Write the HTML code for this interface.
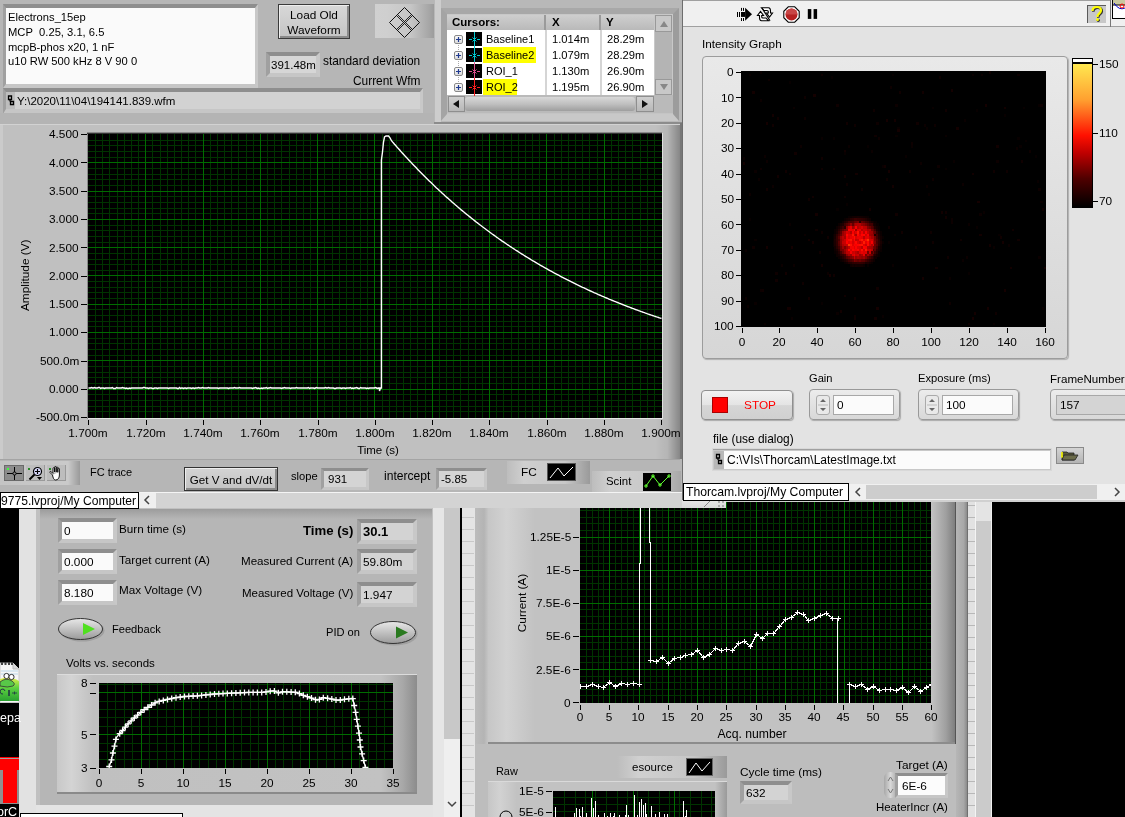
<!DOCTYPE html><html><head><meta charset="utf-8"><style>
html,body{margin:0;padding:0;width:1125px;height:817px;overflow:hidden;background:#000}
div,svg,span{position:absolute}
.t{font-family:"Liberation Sans",sans-serif;white-space:pre;color:#000;will-change:transform}
svg path, svg rect, svg circle{position:static}
</style></head><body>
<div style="left:19px;top:508px;width:443px;height:309px;background:#e2e2e2"></div>
<div style="left:36px;top:508px;width:397px;height:297px;background:#c0c0c0"></div>
<div style="left:40px;top:509px;width:392px;height:296px;background:#b6b6b6"></div>
<div style="left:40px;top:509px;width:392px;height:10px;background:linear-gradient(#9c9c9c,#b6b6b6)"></div>
<div style="left:36px;top:805px;width:397px;height:12px;background:#e4e4e4"></div>
<div style="left:433px;top:508px;width:11px;height:309px;background:#e6e6e6"></div>
<div style="left:444px;top:508px;width:16px;height:231px;background:#c8c8c8"></div>
<div style="left:444px;top:739px;width:16px;height:78px;background:#efefef"></div>
<svg style="left:446px;top:800px" width="12" height="10"><path d="M2 2 L6 6 L10 2" stroke="#444" stroke-width="1.5" fill="none"/></svg>
<div style="left:460px;top:508px;width:2px;height:309px;background:#000"></div>
<div style="left:58px;top:518px;width:59px;height:25px;box-sizing:border-box;border-style:solid;border-width:4px 4px 4px 4px;border-color:#8e8e8e #c8c8c8 #c6c6c6 #a0a0a0;background:#fafafa"></div>
<span class="t" style="left:64px;top:523.6px;font-size:11.8px;line-height:14px;">0</span>
<div style="left:58px;top:549px;width:59px;height:25px;box-sizing:border-box;border-style:solid;border-width:4px 4px 4px 4px;border-color:#8e8e8e #c8c8c8 #c6c6c6 #a0a0a0;background:#fafafa"></div>
<span class="t" style="left:64px;top:554.6px;font-size:11.8px;line-height:14px;">0.000</span>
<div style="left:58px;top:580px;width:59px;height:25px;box-sizing:border-box;border-style:solid;border-width:4px 4px 4px 4px;border-color:#8e8e8e #c8c8c8 #c6c6c6 #a0a0a0;background:#fafafa"></div>
<span class="t" style="left:64px;top:585.6px;font-size:11.8px;line-height:14px;">8.180</span>
<span class="t" style="left:119px;top:521.6px;font-size:11.7px;line-height:13px;">Burn time (s)</span>
<span class="t" style="left:119px;top:552.6px;font-size:11.7px;line-height:13px;">Target current (A)</span>
<span class="t" style="left:119px;top:582.6px;font-size:11.7px;line-height:13px;">Max Voltage (V)</span>
<div style="left:357px;top:519px;width:60px;height:25px;box-sizing:border-box;border-style:solid;border-width:4px 4px 4px 4px;border-color:#8e8e8e #c8c8c8 #c6c6c6 #a0a0a0;background:#d3d3d3"></div>
<span class="t" style="left:363px;top:524.1px;font-size:13px;line-height:15px;font-weight:bold">30.1</span>
<div style="left:357px;top:549px;width:60px;height:25px;box-sizing:border-box;border-style:solid;border-width:4px 4px 4px 4px;border-color:#8e8e8e #c8c8c8 #c6c6c6 #a0a0a0;background:#d3d3d3"></div>
<span class="t" style="left:363px;top:554.6px;font-size:11.8px;line-height:14px;">59.80m</span>
<div style="left:357px;top:582px;width:60px;height:25px;box-sizing:border-box;border-style:solid;border-width:4px 4px 4px 4px;border-color:#8e8e8e #c8c8c8 #c6c6c6 #a0a0a0;background:#d3d3d3"></div>
<span class="t" style="left:363px;top:587.6px;font-size:11.8px;line-height:14px;">1.947</span>
<span class="t" style="right:772px;top:522.7px;font-size:13.2px;line-height:15px;"><b>Time (s)</b></span>
<span class="t" style="right:772px;top:553.6px;font-size:11.6px;line-height:13px;">Measured Current (A)</span>
<span class="t" style="right:772px;top:586.6px;font-size:11.5px;line-height:13px;">Measured Voltage (V)</span>
<svg style="left:58px;top:618px" width="49" height="26"><defs><linearGradient id="og58" x1="0" y1="0" x2="0" y2="1"><stop offset="0" stop-color="#e8e8e8"/><stop offset="1" stop-color="#9a9a9a"/></linearGradient></defs><ellipse cx="24.0" cy="12.5" rx="22.5" ry="11.0" fill="#8a8a8a" opacity="0.5"/><ellipse cx="22.5" cy="11.0" rx="22.0" ry="10.5" fill="url(#og58)" stroke="#333" stroke-width="1"/><path d="M25 5.0 L37 11.0 L25 17.0Z" fill="#50e020"/></svg>
<span class="t" style="left:112px;top:622.6px;font-size:11.1px;line-height:13px;">Feedback</span>
<svg style="left:370px;top:621px" width="50" height="27"><defs><linearGradient id="og370" x1="0" y1="0" x2="0" y2="1"><stop offset="0" stop-color="#e8e8e8"/><stop offset="1" stop-color="#9a9a9a"/></linearGradient></defs><ellipse cx="24.5" cy="13.0" rx="23.0" ry="11.5" fill="#8a8a8a" opacity="0.5"/><ellipse cx="23.0" cy="11.5" rx="22.5" ry="11.0" fill="url(#og370)" stroke="#333" stroke-width="1"/><path d="M26 5.5 L38 11.5 L26 17.5Z" fill="#2a7a20"/></svg>
<span class="t" style="right:765px;top:625.6px;font-size:11.1px;line-height:13px;">PID on</span>
<span class="t" style="left:66px;top:657.3px;font-size:11.5px;line-height:13px;">Volts vs. seconds</span>
<div style="left:57px;top:674px;width:360px;height:120px;background:linear-gradient(90deg,#c8c8c8,#d4d4d4 4%,#c0c0c0 10%,#c2c2c2 90%,#a8a8a8 96%,#8c8c8c);border-top:1px solid #dcdcdc;box-sizing:border-box"></div>
<div style="left:57px;top:792px;width:360px;height:2px;background:#8a8a8a"></div>
<svg style="left:99px;top:683px" width="294" height="85" shape-rendering="crispEdges"><rect width="294" height="85" fill="#000"/><path d="M8.5 0V85M16.5 0V85M25.5 0V85M33.5 0V85M50.5 0V85M58.5 0V85M67.5 0V85M75.5 0V85M92.5 0V85M100.5 0V85M109.5 0V85M117.5 0V85M134.5 0V85M142.5 0V85M151.5 0V85M159.5 0V85M176.5 0V85M184.5 0V85M193.5 0V85M201.5 0V85M218.5 0V85M227.5 0V85M235.5 0V85M243.5 0V85M260.5 0V85M269.5 0V85M277.5 0V85M285.5 0V85M0 1.5H294M0 18.5H294M0 26.5H294M0 34.5H294M0 43.5H294M0 60.5H294M0 68.5H294M0 76.5H294" stroke="#003400"/><path d="M42.5 0V85M84.5 0V85M126.5 0V85M168.5 0V85M210.5 0V85M252.5 0V85M0 9.5H294M0 51.5H294" stroke="#006c00"/><path d="M10.2 83.5 L12.4 77.2 L13.8 70.4 L15.6 62.6 L17.3 54.7 L19.5 51.9 L23.0 48.3 L28.0 42.0 L33.0 37.0 L38.7 32.0 L43.7 27.7 L50.0 23.5 L57.2 19.2 L65.7 17.0 L75.7 14.9 L85.6 13.5 L98.4 12.8 L116.9 10.9 L138.2 9.9 L151.0 9.4 L164.3 9.4 L174.3 7.7 L179.7 9.9 L184.3 8.6 L197.7 9.4 L204.3 12.3 L212.3 15.0 L218.3 17.4 L224.3 14.7 L231.0 15.7 L239.0 17.4 L247.0 16.1 L253.7 15.3 L256.3 27.7 L258.3 39.7 L260.3 51.7 L261.4 63.7 L263.4 72.3 L265.4 80.3 L266.7 85.7" stroke="#fff" stroke-width="1.3" fill="none" shape-rendering="geometricPrecision"/><path d="M7.2 83.5h6M10.2 80.5v6M9.5 76.9h6M12.5 73.9v6M10.9 70.0h6M13.9 67.0v6M12.5 63.2h6M15.5 60.2v6M13.9 56.4h6M16.9 53.4v6M17.7 50.7h6M20.7 47.7v6M20.6 47.5h6M23.6 44.5v6M23.3 44.1h6M26.3 41.1v6M26.1 40.9h6M29.1 37.9v6M29.2 37.8h6M32.2 34.8v6M32.3 35.0h6M35.3 32.0v6M35.6 32.1h6M38.6 29.1v6M38.8 29.3h6M41.8 26.3v6M42.2 26.7h6M45.2 23.7v6M45.8 24.3h6M48.8 21.3v6M49.5 22.0h6M52.5 19.0v6M53.1 19.8h6M56.1 16.8v6M57.2 18.4h6M60.2 15.4v6M61.3 17.4h6M64.3 14.4v6M65.5 16.4h6M68.5 13.4v6M69.7 15.5h6M72.7 12.5v6M74.0 14.7h6M77.0 11.7v6M78.2 14.1h6M81.2 11.1v6M82.5 13.5h6M85.5 10.5v6M86.8 13.3h6M89.8 10.3v6M91.1 13.0h6M94.1 10.0v6M95.4 12.8h6M98.4 9.8v6M99.6 12.4h6M102.6 9.4v6M103.9 11.9h6M106.9 8.9v6M108.2 11.5h6M111.2 8.5v6M112.5 11.0h6M115.5 8.0v6M116.8 10.8h6M119.8 7.8v6M121.0 10.6h6M124.0 7.6v6M125.3 10.4h6M128.3 7.4v6M129.6 10.2h6M132.6 7.2v6M133.9 10.0h6M136.9 7.0v6M138.2 9.8h6M141.2 6.8v6M142.5 9.6h6M145.5 6.6v6M146.8 9.4h6M149.8 6.4v6M151.1 9.4h6M154.1 6.4v6M155.4 9.4h6M158.4 6.4v6M159.7 9.4h6M162.7 6.4v6M164.0 8.9h6M167.0 5.9v6M168.2 8.2h6M171.2 5.2v6M172.4 8.1h6M175.4 5.1v6M176.4 9.8h6M179.4 6.8v6M180.5 8.8h6M183.5 5.8v6M184.8 8.8h6M187.8 5.8v6M189.1 9.1h6M192.1 6.1v6M193.3 9.3h6M196.3 6.3v6M197.4 10.6h6M200.4 7.6v6M201.3 12.3h6M204.3 9.3v6M205.4 13.7h6M208.4 10.7v6M209.5 15.1h6M212.5 12.1v6M213.5 16.7h6M216.5 13.7v6M217.4 16.4h6M220.4 13.4v6M221.3 14.7h6M224.3 11.7v6M225.6 15.3h6M228.6 12.3v6M229.8 16.1h6M232.8 13.1v6M234.0 17.0h6M237.0 14.0v6M238.3 17.0h6M241.3 14.0v6M242.5 16.3h6M245.5 13.3v6M246.8 15.8h6M249.8 12.8v6M250.8 15.6h6M253.8 12.6v6M252.2 22.5h6M255.2 19.5v6M253.6 29.4h6M256.6 26.4v6M254.7 36.3h6M257.7 33.3v6M255.9 43.2h6M258.9 40.2v6M257.0 50.1h6M260.0 47.1v6M257.8 57.0h6M260.8 54.0v6M258.5 64.0h6M261.5 61.0v6M260.1 70.8h6M263.1 67.8v6M261.7 77.6h6M264.7 74.6v6M263.4 84.4h6M266.4 81.4v6" stroke="#fff" stroke-width="1.3" fill="none" shape-rendering="geometricPrecision"/></svg>
<div style="left:90px;top:683px;width:6px;height:1px;background:#000"></div>
<span class="t" style="right:1037px;top:676.1px;font-size:11.8px;line-height:14px;">8</span>
<div style="left:90px;top:734px;width:6px;height:1px;background:#000"></div>
<span class="t" style="right:1037px;top:727.6px;font-size:11.8px;line-height:14px;">5</span>
<div style="left:90px;top:768px;width:6px;height:1px;background:#000"></div>
<span class="t" style="right:1037px;top:760.6px;font-size:11.8px;line-height:14px;">3</span>
<div style="left:90px;top:693px;width:6px;height:1px;background:#000"></div>
<div style="left:99px;top:769px;width:1px;height:5px;background:#000"></div>
<span class="t" style="left:-101.3px;width:400px;text-align:center;top:776.1px;font-size:11.8px;line-height:14px;">0</span>
<div style="left:141px;top:769px;width:1px;height:5px;background:#000"></div>
<span class="t" style="left:-59.25999999999999px;width:400px;text-align:center;top:776.1px;font-size:11.8px;line-height:14px;">5</span>
<div style="left:183px;top:769px;width:1px;height:5px;background:#000"></div>
<span class="t" style="left:-17.22px;width:400px;text-align:center;top:776.1px;font-size:11.8px;line-height:14px;">10</span>
<div style="left:225px;top:769px;width:1px;height:5px;background:#000"></div>
<span class="t" style="left:24.819999999999993px;width:400px;text-align:center;top:776.1px;font-size:11.8px;line-height:14px;">15</span>
<div style="left:267px;top:769px;width:1px;height:5px;background:#000"></div>
<span class="t" style="left:66.86000000000001px;width:400px;text-align:center;top:776.1px;font-size:11.8px;line-height:14px;">20</span>
<div style="left:309px;top:769px;width:1px;height:5px;background:#000"></div>
<span class="t" style="left:108.89999999999998px;width:400px;text-align:center;top:776.1px;font-size:11.8px;line-height:14px;">25</span>
<div style="left:351px;top:769px;width:1px;height:5px;background:#000"></div>
<span class="t" style="left:150.94px;width:400px;text-align:center;top:776.1px;font-size:11.8px;line-height:14px;">30</span>
<div style="left:393px;top:769px;width:1px;height:5px;background:#000"></div>
<span class="t" style="left:192.97999999999996px;width:400px;text-align:center;top:776.1px;font-size:11.8px;line-height:14px;">35</span>
<div style="left:462px;top:508px;width:13px;height:309px;background:#e4e4e4"></div>
<svg style="left:462px;top:502px" width="13" height="315" shape-rendering="crispEdges"><path d="M0 15.5H12M0 27.5H12M0 39.5H12M0 51.5H12M0 63.5H12M0 75.5H12M0 87.5H12M0 99.5H12M0 111.5H12M0 123.5H12M0 135.5H12M0 147.5H12M0 159.5H12M0 171.5H12M0 183.5H12M0 195.5H12M0 207.5H12M0 219.5H12M0 231.5H12M0 243.5H12M0 255.5H12M0 267.5H12M0 279.5H12M0 291.5H12M0 303.5H12M0 315.5H12" stroke="#c8c8c8"/></svg>
<div style="left:475px;top:502px;width:517px;height:315px;background:#bdbdbd"></div>
<div style="left:475px;top:502px;width:13px;height:242px;background:linear-gradient(90deg,#bcbcbc,#b4b4b4 70%,#c4c4c4)"></div>
<div style="left:488px;top:502px;width:467px;height:242px;background:linear-gradient(90deg,#c6c6c6,#d2d2d2 4%,#c2c2c2 10%,#c2c2c2 95%,#a0a0a0 98%,#7e7e7e)"></div>
<div style="left:488px;top:742px;width:467px;height:2px;background:#8c8c8c"></div>
<div style="left:955px;top:502px;width:1px;height:242px;background:#555"></div>
<div style="left:956px;top:502px;width:11px;height:315px;background:linear-gradient(90deg,#b6b6b6,#a8a8a8 70%,#8a8a8a)"></div>
<div style="left:967px;top:502px;width:1px;height:315px;background:#707070"></div>
<div style="left:968px;top:502px;width:7px;height:315px;background:#e2e2e2"></div>
<svg style="left:968px;top:502px" width="7" height="315" shape-rendering="crispEdges"><path d="M0 3.5H7M0 15.5H7M0 27.5H7M0 39.5H7M0 51.5H7M0 63.5H7M0 75.5H7M0 87.5H7M0 99.5H7M0 111.5H7M0 123.5H7M0 135.5H7M0 147.5H7M0 159.5H7M0 171.5H7M0 183.5H7M0 195.5H7M0 207.5H7M0 219.5H7M0 231.5H7M0 243.5H7M0 255.5H7M0 267.5H7M0 279.5H7M0 291.5H7M0 303.5H7M0 315.5H7" stroke="#b8b8b8"/></svg>
<div style="left:975px;top:502px;width:17px;height:315px;background:#cbcbcb;border-left:1px solid #f4f4f4;border-right:1px solid #f0f0f0;box-sizing:border-box"></div>
<div style="left:976px;top:502px;width:15px;height:19px;background:#e4e4e4"></div>
<svg style="left:580px;top:502px" width="351" height="201" shape-rendering="crispEdges"><rect width="351" height="201" fill="#000"/><path d="M6.5 0V201M12.5 0V201M18.5 0V201M23.5 0V201M35.5 0V201M41.5 0V201M47.5 0V201M53.5 0V201M64.5 0V201M70.5 0V201M76.5 0V201M82.5 0V201M94.5 0V201M100.5 0V201M105.5 0V201M111.5 0V201M123.5 0V201M129.5 0V201M135.5 0V201M141.5 0V201M152.5 0V201M158.5 0V201M164.5 0V201M170.5 0V201M182.5 0V201M187.5 0V201M193.5 0V201M199.5 0V201M211.5 0V201M217.5 0V201M223.5 0V201M228.5 0V201M240.5 0V201M246.5 0V201M252.5 0V201M258.5 0V201M269.5 0V201M275.5 0V201M281.5 0V201M287.5 0V201M299.5 0V201M305.5 0V201M310.5 0V201M316.5 0V201M328.5 0V201M334.5 0V201M340.5 0V201M346.5 0V201M0 193.5H351M0 187.5H351M0 180.5H351M0 174.5H351M0 160.5H351M0 154.5H351M0 147.5H351M0 140.5H351M0 127.5H351M0 121.5H351M0 114.5H351M0 107.5H351M0 94.5H351M0 87.5H351M0 81.5H351M0 74.5H351M0 61.5H351M0 54.5H351M0 48.5H351M0 41.5H351M0 28.5H351M0 21.5H351M0 15.5H351M0 8.5H351" stroke="#003400"/><path d="M29.5 0V201M59.5 0V201M88.5 0V201M117.5 0V201M146.5 0V201M176.5 0V201M205.5 0V201M234.5 0V201M264.5 0V201M293.5 0V201M322.5 0V201M0 167.5H351M0 134.5H351M0 101.5H351M0 68.5H351M0 35.5H351" stroke="#006c00"/><path d="M0.5 184.5 L6.5 184.5 L12.5 182.5 L18.5 184.5 L23.5 185.5 L29.5 180.5 L35.5 184.5 L41.5 181.5 L47.5 182.5 L53.5 181.5 L59.5 182.5 L59.5 61.0 L60.5 61.0 L60.5 -5.0 L69.5 -5.0 L69.5 40.0 L70.5 40.0 L70.5 158.0 L70.5 158.5 L76.5 159.5 L82.5 155.5 L88.5 161.5 L94.5 156.5 L100.5 155.5 L105.5 153.5 L111.5 152.5 L117.5 148.5 L123.5 155.5 L129.5 152.5 L135.5 146.5 L141.5 148.5 L146.5 147.5 L152.5 148.5 L158.5 141.5 L164.5 139.5 L170.5 144.5 L176.5 132.5 L182.5 136.5 L187.5 131.5 L193.5 131.5 L199.5 124.5 L205.5 117.5 L211.5 115.5 L217.5 110.5 L223.5 112.5 L228.5 118.5 L234.5 116.5 L240.5 113.5 L246.5 111.5 L252.5 116.5 L258.5 116.5 L257.5 116.5 L257.5 203.0 L269.5 203.0 L269.5 182.5 L275.5 184.5 L281.5 182.5 L287.5 187.5 L293.5 184.5 L299.5 188.5 L305.5 187.5 L310.5 187.5 L316.5 188.5 L322.5 185.5 L328.5 190.5 L334.5 184.5 L340.5 189.5 L346.5 185.5 L351.5 182.5" stroke="#fff" stroke-width="1" fill="none" shape-rendering="crispEdges"/><path d="M-2.0 184.5h5M0.5 182.0v5M4.0 184.5h5M6.5 182.0v5M10.0 182.5h5M12.5 180.0v5M16.0 184.5h5M18.5 182.0v5M21.0 185.5h5M23.5 183.0v5M27.0 180.5h5M29.5 178.0v5M33.0 184.5h5M35.5 182.0v5M39.0 181.5h5M41.5 179.0v5M45.0 182.5h5M47.5 180.0v5M51.0 181.5h5M53.5 179.0v5M57.0 182.5h5M59.5 180.0v5M68.0 158.5h5M70.5 156.0v5M74.0 159.5h5M76.5 157.0v5M80.0 155.5h5M82.5 153.0v5M86.0 161.5h5M88.5 159.0v5M92.0 156.5h5M94.5 154.0v5M98.0 155.5h5M100.5 153.0v5M103.0 153.5h5M105.5 151.0v5M109.0 152.5h5M111.5 150.0v5M115.0 148.5h5M117.5 146.0v5M121.0 155.5h5M123.5 153.0v5M127.0 152.5h5M129.5 150.0v5M133.0 146.5h5M135.5 144.0v5M139.0 148.5h5M141.5 146.0v5M144.0 147.5h5M146.5 145.0v5M150.0 148.5h5M152.5 146.0v5M156.0 141.5h5M158.5 139.0v5M162.0 139.5h5M164.5 137.0v5M168.0 144.5h5M170.5 142.0v5M174.0 132.5h5M176.5 130.0v5M180.0 136.5h5M182.5 134.0v5M185.0 131.5h5M187.5 129.0v5M191.0 131.5h5M193.5 129.0v5M197.0 124.5h5M199.5 122.0v5M203.0 117.5h5M205.5 115.0v5M209.0 115.5h5M211.5 113.0v5M215.0 110.5h5M217.5 108.0v5M221.0 112.5h5M223.5 110.0v5M226.0 118.5h5M228.5 116.0v5M232.0 116.5h5M234.5 114.0v5M238.0 113.5h5M240.5 111.0v5M244.0 111.5h5M246.5 109.0v5M250.0 116.5h5M252.5 114.0v5M256.0 116.5h5M258.5 114.0v5M267.0 182.5h5M269.5 180.0v5M273.0 184.5h5M275.5 182.0v5M279.0 182.5h5M281.5 180.0v5M285.0 187.5h5M287.5 185.0v5M291.0 184.5h5M293.5 182.0v5M297.0 188.5h5M299.5 186.0v5M303.0 187.5h5M305.5 185.0v5M308.0 187.5h5M310.5 185.0v5M314.0 188.5h5M316.5 186.0v5M320.0 185.5h5M322.5 183.0v5M326.0 190.5h5M328.5 188.0v5M332.0 184.5h5M334.5 182.0v5M338.0 189.5h5M340.5 187.0v5M344.0 185.5h5M346.5 183.0v5M349.0 182.5h5M351.5 180.0v5" stroke="#fff" stroke-width="1" fill="none" shape-rendering="crispEdges"/></svg>
<div style="left:573px;top:702px;width:6px;height:1px;background:#000"></div>
<span class="t" style="right:554px;top:695.6px;font-size:11.8px;line-height:14px;">0</span>
<div style="left:573px;top:669px;width:6px;height:1px;background:#000"></div>
<span class="t" style="right:554px;top:662.5px;font-size:11.8px;line-height:14px;">2.5E-6</span>
<div style="left:573px;top:636px;width:6px;height:1px;background:#000"></div>
<span class="t" style="right:554px;top:629.4px;font-size:11.8px;line-height:14px;">5E-6</span>
<div style="left:573px;top:603px;width:6px;height:1px;background:#000"></div>
<span class="t" style="right:554px;top:596.3px;font-size:11.8px;line-height:14px;">7.5E-6</span>
<div style="left:573px;top:570px;width:6px;height:1px;background:#000"></div>
<span class="t" style="right:554px;top:563.2px;font-size:11.8px;line-height:14px;">1E-5</span>
<div style="left:573px;top:537px;width:6px;height:1px;background:#000"></div>
<span class="t" style="right:554px;top:530.1px;font-size:11.8px;line-height:14px;">1.25E-5</span>
<div style="left:580px;top:705px;width:1px;height:5px;background:#000"></div>
<span class="t" style="left:379.79999999999995px;width:400px;text-align:center;top:710.1px;font-size:11.8px;line-height:14px;">0</span>
<div style="left:609px;top:705px;width:1px;height:5px;background:#000"></div>
<span class="t" style="left:409.0899999999999px;width:400px;text-align:center;top:710.1px;font-size:11.8px;line-height:14px;">5</span>
<div style="left:638px;top:705px;width:1px;height:5px;background:#000"></div>
<span class="t" style="left:438.38px;width:400px;text-align:center;top:710.1px;font-size:11.8px;line-height:14px;">10</span>
<div style="left:668px;top:705px;width:1px;height:5px;background:#000"></div>
<span class="t" style="left:467.66999999999996px;width:400px;text-align:center;top:710.1px;font-size:11.8px;line-height:14px;">15</span>
<div style="left:697px;top:705px;width:1px;height:5px;background:#000"></div>
<span class="t" style="left:496.9599999999999px;width:400px;text-align:center;top:710.1px;font-size:11.8px;line-height:14px;">20</span>
<div style="left:726px;top:705px;width:1px;height:5px;background:#000"></div>
<span class="t" style="left:526.25px;width:400px;text-align:center;top:710.1px;font-size:11.8px;line-height:14px;">25</span>
<div style="left:756px;top:705px;width:1px;height:5px;background:#000"></div>
<span class="t" style="left:555.54px;width:400px;text-align:center;top:710.1px;font-size:11.8px;line-height:14px;">30</span>
<div style="left:785px;top:705px;width:1px;height:5px;background:#000"></div>
<span class="t" style="left:584.8299999999999px;width:400px;text-align:center;top:710.1px;font-size:11.8px;line-height:14px;">35</span>
<div style="left:814px;top:705px;width:1px;height:5px;background:#000"></div>
<span class="t" style="left:614.1199999999999px;width:400px;text-align:center;top:710.1px;font-size:11.8px;line-height:14px;">40</span>
<div style="left:843px;top:705px;width:1px;height:5px;background:#000"></div>
<span class="t" style="left:643.41px;width:400px;text-align:center;top:710.1px;font-size:11.8px;line-height:14px;">45</span>
<div style="left:873px;top:705px;width:1px;height:5px;background:#000"></div>
<span class="t" style="left:672.6999999999999px;width:400px;text-align:center;top:710.1px;font-size:11.8px;line-height:14px;">50</span>
<div style="left:902px;top:705px;width:1px;height:5px;background:#000"></div>
<span class="t" style="left:701.99px;width:400px;text-align:center;top:710.1px;font-size:11.8px;line-height:14px;">55</span>
<div style="left:931px;top:705px;width:1px;height:5px;background:#000"></div>
<span class="t" style="left:731.28px;width:400px;text-align:center;top:710.1px;font-size:11.8px;line-height:14px;">60</span>
<span class="t" style="left:551.6px;width:400px;text-align:center;top:727.1px;font-size:12.2px;line-height:14px;">Acq. number</span>
<span class="t" style="left:487px;top:596px;width:70px;text-align:center;font-size:11.8px;line-height:14px;transform:rotate(-90deg)">Current (A)</span>
<span class="t" style="left:496px;top:764.6px;font-size:10.9px;line-height:13px;">Raw</span>
<div style="left:617px;top:756px;width:110px;height:22px;background:linear-gradient(90deg,#bdbdbd,#d0d0d0 20%,#c6c6c6 70%,#9a9a9a)"></div>
<span class="t" style="left:632px;top:760.6px;font-size:11.5px;line-height:13px;">esource</span>
<div style="left:686px;top:758px;width:27px;height:18px;background:#000;border:1px solid #666;box-sizing:border-box"></div>
<svg style="left:686px;top:758px" width="27" height="18"><path d="M3 15 L10 5 L16 13 L24 4" stroke="#fff" fill="none"/></svg>
<div style="left:488px;top:781px;width:239px;height:36px;background:linear-gradient(90deg,#c6c6c6,#d2d2d2 5%,#c2c2c2 12%,#c2c2c2 95%,#9a9a9a)"></div>
<div style="left:488px;top:781px;width:239px;height:1px;background:#dadada"></div>
<svg style="left:553px;top:791px" width="162" height="26" shape-rendering="crispEdges"><rect width="162" height="26" fill="#000"/><path d="M11.5 0V26M22.5 0V26M32.5 0V26M42.5 0V26M53.5 0V26M64.5 0V26M74.5 0V26M84.5 0V26M95.5 0V26M106.5 0V26M116.5 0V26M126.5 0V26M137.5 0V26M148.5 0V26M158.5 0V26M0 6.5H162M0 13.5H162M0 20.5H162" stroke="#003400"/><path d="M39.5 0V26M80.5 0V26M121.5 0V26" stroke="#006c00"/><path d="M2.5 26V16M23.5 26V17M26.5 26V18M29.5 26V16M38.5 26V7M40.5 26V17M42.5 26V10M61.5 26V22M73.5 26V14M81.5 26V4M86.5 26V11M88.5 26V8M90.5 26V14M92.5 26V12M98.5 26V15M106.5 26V21M130.5 26V10M133.5 26V19M21.5 26V22M27.5 26V25M33.5 26V22M42.5 26V24M45.5 26V24M51.5 26V22M54.5 26V25M57.5 26V22M60.5 26V25M66.5 26V24M72.5 26V24M75.5 26V24M84.5 26V24M93.5 26V23M102.5 26V23M111.5 26V23M114.5 26V23M132.5 26V25" stroke="#fff"/></svg>
<div style="left:546px;top:791px;width:6px;height:1px;background:#000"></div>
<span class="t" style="right:581px;top:784.1px;font-size:11.8px;line-height:14px;">1E-5</span>
<div style="left:546px;top:812px;width:6px;height:1px;background:#000"></div>
<span class="t" style="right:581px;top:805.1px;font-size:11.8px;line-height:14px;">5E-6</span>
<svg style="left:499px;top:806px" width="14" height="12"><ellipse cx="7" cy="11" rx="6" ry="6" fill="none" stroke="#000"/></svg>
<span class="t" style="left:740px;top:764.7px;font-size:11.8px;line-height:14px;">Cycle time (ms)</span>
<div style="left:740px;top:781px;width:52px;height:23px;box-sizing:border-box;border-style:solid;border-width:4px 4px 4px 4px;border-color:#8e8e8e #c8c8c8 #c6c6c6 #a0a0a0;background:#d3d3d3"></div>
<span class="t" style="left:746px;top:785.6px;font-size:11.8px;line-height:14px;">632</span>
<span class="t" style="right:177px;top:757.8px;font-size:11.8px;line-height:14px;">Target (A)</span>
<div style="left:884px;top:772px;width:13px;height:26px;background:linear-gradient(90deg,#a8a8a8,#d8d8d8,#a8a8a8);border-radius:6px"></div>
<svg style="left:884px;top:773px" width="13" height="24"><path d="M4 8 L6.5 4 L9 8 M4 16 L6.5 20 L9 16" stroke="#777" fill="none"/></svg>
<div style="left:895px;top:773px;width:53px;height:25px;box-sizing:border-box;border-style:solid;border-width:3px 3px 3px 3px;border-color:#8e8e8e #c8c8c8 #c6c6c6 #a0a0a0;background:#fcfcfc"></div>
<span class="t" style="left:902px;top:779.1px;font-size:11.8px;line-height:14px;">6E-6</span>
<span class="t" style="right:177px;top:801.1px;font-size:11.45px;line-height:13px;">HeaterIncr (A)</span>
<svg style="left:0px;top:655px" width="20" height="50"><defs><linearGradient id="npg" x1="0" y1="0" x2="0" y2="1"><stop offset="0" stop-color="#e4f048"/><stop offset="0.45" stop-color="#5cd040"/><stop offset="1" stop-color="#2aa030"/></linearGradient></defs><path d="M0 8 H13 L19 14 V47.5 H0Z" fill="#f6f6f6" stroke="#c8c8c8"/><path d="M13 8 V14 H19" fill="#d8d8d8" stroke="#bbb"/><rect x="1" y="7" width="2" height="3" fill="#444"/><rect x="4.5" y="7" width="2" height="3" fill="#444"/><rect x="8" y="7" width="2" height="3" fill="#444"/><rect x="11" y="7" width="2" height="3" fill="#444"/><path d="M1 16 H18 M1 19 H18" stroke="#bcd8e8"/><path d="M0 24 Q10 20 19 26 V46 H0Z" fill="url(#npg)"/><path d="M0 27 Q6 22 12 26 Q16 29 13 31 Q8 33 0 31Z" fill="#58c848" stroke="#333" stroke-width="0.8"/><circle cx="6.5" cy="21" r="2.6" fill="#fff" stroke="#222" stroke-width="0.9"/><circle cx="11.5" cy="22" r="2.6" fill="#fff" stroke="#222" stroke-width="0.9"/><path d="M3 39 A2.5 2.5 0 1 1 5 36" fill="none" stroke="#234" stroke-width="1"/><path d="M8.5 35 V41 M9.5 35 V41 M12 38 H17 M14.5 36.5 V39.5" stroke="#234" stroke-width="0.8"/></svg>
<span class="t" style="left:0px;top:711.1px;font-size:12.5px;line-height:14px;"><span style="color:#fff">epa</span></span>
<div style="left:0px;top:757px;width:19px;height:13px;background:#ff0000"></div>
<div style="left:3px;top:770px;width:14px;height:33px;background:#ff0000"></div>
<div style="left:0px;top:770px;width:3px;height:34px;background:#909090"></div>
<div style="left:17px;top:770px;width:2px;height:34px;background:#909090"></div>
<div style="left:3px;top:803px;width:14px;height:1px;background:#909090"></div>
<div style="left:0px;top:758px;width:19px;height:1px;background:#a0a0a0"></div>
<span class="t" style="left:-3px;top:805.1px;font-size:12.5px;line-height:14px;"><span style="color:#fff">orC</span></span>
<div style="left:20px;top:813px;width:163px;height:4px;background:#fff;border:1px solid #000;border-bottom:none;box-sizing:border-box"></div>
<div style="left:993px;top:502px;width:132px;height:315px;background:#000"></div>
<div style="left:0px;top:0px;width:682px;height:508px;background:#b6b6b6"></div>
<div style="left:3px;top:4px;width:255px;height:84px;box-sizing:border-box;border-style:solid;border-width:4px 3px 4px 3px;border-color:#8e8e8e #c8c8c8 #c6c6c6 #a0a0a0;background:#fafafa"></div>
<span class="t" style="left:8px;top:10.9px;font-size:11.2px;line-height:13px;">Electrons_15ep</span>
<span class="t" style="left:8px;top:25.7px;font-size:11.2px;line-height:13px;">MCP&nbsp;&nbsp;0.25, 3.1, 6.5</span>
<span class="t" style="left:8px;top:40.5px;font-size:11.2px;line-height:13px;">mcpB-phos x20, 1 nF</span>
<span class="t" style="left:8px;top:55.3px;font-size:11.2px;line-height:13px;">u10 RW 500 kHz 8 V 90 0</span>
<div style="left:3px;top:88px;width:420px;height:26px;box-sizing:border-box;border-style:solid;border-width:4px 3px 5px 3px;border-color:#8e8e8e #c8c8c8 #c6c6c6 #a0a0a0;background:#d2d2d2"></div>
<div style="left:6px;top:92px;width:9px;height:17px;background:#bdbdbd"></div>
<svg style="left:7px;top:95px" width="8" height="11"><path d="M1.5 1h3v3.5h-3z M3 4.5v2 M3.5 6.5h3v3h-3z" fill="none" stroke="#000" stroke-width="1.3"/></svg>
<span class="t" style="left:17px;top:94.6px;font-size:11.5px;line-height:13px;">Y:\2020\11\04\194141.839.wfm</span>
<div style="left:278px;top:4px;width:72px;height:35px;background:linear-gradient(#d8d8d8,#c4c4c4);border:1px solid #3a3a3a;box-sizing:border-box;box-shadow:inset 1px 1px 0 #eee, inset -2px -2px 0 #8a8a8a"></div>
<span class="t" style="left:114px;width:400px;text-align:center;top:8.1px;font-size:11.8px;line-height:14px;">Load Old</span>
<span class="t" style="left:114px;width:400px;text-align:center;top:23.1px;font-size:11.8px;line-height:14px;">Waveform</span>
<div style="left:375px;top:4px;width:59px;height:34px;background:linear-gradient(90deg,#d0d0d0,#cfcfcf 20%,#c6c6c6 60%,#a8a8a8 90%,#9c9c9c)"></div>
<svg style="left:388px;top:6px" width="34" height="32"><path d="M16.5 1.5 L31.5 16.5 L16.5 31.5 L1.5 16.5 Z" fill="none" stroke="#111" stroke-width="1"/><path d="M9.5 8.5 L24.5 23.5 M8.5 9.5 L23.5 24.5 M23.5 8.5 L8.5 23.5 M24.5 9.5 L9.5 24.5" fill="none" stroke="#111" stroke-width="0.9"/></svg>
<div style="left:266px;top:52px;width:54px;height:25px;box-sizing:border-box;border-style:solid;border-width:4px 4px 4px 4px;border-color:#8e8e8e #c8c8c8 #c6c6c6 #a0a0a0;background:#d6d6d6"></div>
<span class="t" style="left:271px;top:58.6px;font-size:11.5px;line-height:13px;">391.48m</span>
<span class="t" style="left:323px;top:54.1px;font-size:11.9px;line-height:14px;">standard deviation</span>
<span class="t" style="right:705px;top:74.1px;font-size:11.9px;line-height:14px;">Current Wfm</span>
<div style="left:0px;top:113px;width:435px;height:11px;background:#b4b4b4"></div>
<div style="left:434px;top:0px;width:248px;height:124px;background:#b8b8b8"></div>
<div style="left:435px;top:0px;width:6px;height:124px;background:#cdcdcd"></div>
<div style="left:441px;top:8px;width:238px;height:113px;box-sizing:border-box;border-style:solid;border-width:6px 6px 7px 6px;border-color:#a8a8a8 #9c9c9c #c8c8c8 #a4a4a4;background:#c4c4c4"></div>
<div style="left:447px;top:14px;width:226px;height:99px;background:#c8c8c8"></div>
<div style="left:447px;top:15px;width:99px;height:15px;background:linear-gradient(#cfcfcf,#b9b9b9);border-right:2px solid #9a9a9a;box-sizing:border-box"></div>
<div style="left:546px;top:15px;width:55px;height:15px;background:linear-gradient(#cfcfcf,#b9b9b9);border-right:2px solid #9a9a9a;box-sizing:border-box"></div>
<div style="left:601px;top:15px;width:53px;height:15px;background:linear-gradient(#cfcfcf,#b9b9b9)"></div>
<span class="t" style="left:452px;top:16.1px;font-size:11.5px;line-height:13px;"><b>Cursors:</b></span>
<span class="t" style="left:552px;top:16.1px;font-size:11.5px;line-height:13px;"><b>X</b></span>
<span class="t" style="left:606px;top:16.1px;font-size:11.5px;line-height:13px;"><b>Y</b></span>
<div style="left:447px;top:30px;width:207px;height:65px;background:#fff"></div>
<div style="left:545px;top:30px;width:2px;height:65px;background:#d5d5d5"></div>
<div style="left:600px;top:30px;width:2px;height:65px;background:#d5d5d5"></div>
<div style="left:655px;top:15px;width:17px;height:80px;background:#b4b4b4"></div>
<div style="left:655px;top:15px;width:17px;height:17px;background:#c8c8c8;border:1px solid #999;box-sizing:border-box"></div>
<div style="left:655px;top:79px;width:17px;height:16px;background:#c8c8c8;border:1px solid #999;box-sizing:border-box"></div>
<svg style="left:658px;top:19px" width="12" height="10"><path d="M6 2 L10 8 L2 8Z" fill="#888"/></svg>
<svg style="left:658px;top:82px" width="12" height="10"><path d="M6 8 L10 2 L2 2Z" fill="#888"/></svg>
<div style="left:447px;top:95px;width:226px;height:18px;background:#bababa"></div>
<div style="left:448px;top:96px;width:17px;height:16px;background:linear-gradient(#d0d0d0,#b8b8b8);border:1px solid #8e8e8e;box-sizing:border-box"></div>
<div style="left:636px;top:96px;width:18px;height:16px;background:linear-gradient(#d0d0d0,#b8b8b8);border:1px solid #8e8e8e;box-sizing:border-box"></div>
<div style="left:465px;top:97px;width:170px;height:14px;background:linear-gradient(#d8d8d8,#c0c0c0 50%,#9e9e9e);border-radius:3px"></div>
<svg style="left:451px;top:99px" width="10" height="10"><path d="M2 5 L8 1 L8 9Z" fill="#111"/></svg>
<svg style="left:640px;top:99px" width="10" height="10"><path d="M8 5 L2 1 L2 9Z" fill="#111"/></svg>
<svg style="left:458px;top:40px" width="2" height="48"><path d="M0.5 5V11M0.5 21V27M0.5 37V43" stroke="#aaa" stroke-dasharray="1 1"/></svg>
<div style="left:454px;top:35px;width:9px;height:9px;border:1px solid #8a8a8a;border-radius:2px;background:linear-gradient(#fafafa,#dcdcdc);box-sizing:border-box"></div>
<svg style="left:454px;top:35px" width="9" height="9"><path d="M4.5 2v5 M2 4.5h5" stroke="#203a90" stroke-width="1.2"/></svg>
<div style="left:466px;top:32px;width:16px;height:14px;background:#000"></div>
<svg style="left:466px;top:30px" width="16" height="18"><path d="M8.5 2V18 M3 9.5h3 M11 9.5h3 M6.5 7.5l4 4 M10.5 7.5l-4 4" stroke="#00c8d0" stroke-width="1" fill="none"/></svg>
<span class="t" style="left:486px;top:32.6px;font-size:11px;line-height:13px;">Baseline1</span>
<span class="t" style="left:552px;top:32.6px;font-size:11.2px;line-height:13px;">1.014m</span>
<span class="t" style="left:607px;top:32.6px;font-size:11.2px;line-height:13px;">28.29m</span>
<div style="left:454px;top:51px;width:9px;height:9px;border:1px solid #8a8a8a;border-radius:2px;background:linear-gradient(#fafafa,#dcdcdc);box-sizing:border-box"></div>
<svg style="left:454px;top:51px" width="9" height="9"><path d="M4.5 2v5 M2 4.5h5" stroke="#203a90" stroke-width="1.2"/></svg>
<div style="left:466px;top:48px;width:16px;height:14px;background:#000"></div>
<svg style="left:466px;top:46px" width="16" height="18"><path d="M8.5 0V18 M3 9.5h3 M11 9.5h3 M6.5 7.5l4 4 M10.5 7.5l-4 4" stroke="#00c8d0" stroke-width="1" fill="none"/></svg>
<div style="left:483px;top:47px;width:53px;height:16px;background:#ffff00"></div>
<span class="t" style="left:486px;top:48.6px;font-size:11px;line-height:13px;">Baseline2</span>
<span class="t" style="left:552px;top:48.6px;font-size:11.2px;line-height:13px;">1.079m</span>
<span class="t" style="left:607px;top:48.6px;font-size:11.2px;line-height:13px;">28.29m</span>
<div style="left:454px;top:67px;width:9px;height:9px;border:1px solid #8a8a8a;border-radius:2px;background:linear-gradient(#fafafa,#dcdcdc);box-sizing:border-box"></div>
<svg style="left:454px;top:67px" width="9" height="9"><path d="M4.5 2v5 M2 4.5h5" stroke="#203a90" stroke-width="1.2"/></svg>
<div style="left:466px;top:64px;width:16px;height:14px;background:#000"></div>
<svg style="left:466px;top:62px" width="16" height="18"><path d="M8.5 0V18 M3 9.5h3 M11 9.5h3 M6.5 7.5l4 4 M10.5 7.5l-4 4" stroke="#e05090" stroke-width="1" fill="none"/></svg>
<span class="t" style="left:486px;top:64.6px;font-size:11px;line-height:13px;">ROI_1</span>
<span class="t" style="left:552px;top:64.6px;font-size:11.2px;line-height:13px;">1.130m</span>
<span class="t" style="left:607px;top:64.6px;font-size:11.2px;line-height:13px;">26.90m</span>
<div style="left:454px;top:83px;width:9px;height:9px;border:1px solid #8a8a8a;border-radius:2px;background:linear-gradient(#fafafa,#dcdcdc);box-sizing:border-box"></div>
<svg style="left:454px;top:83px" width="9" height="9"><path d="M4.5 2v5 M2 4.5h5" stroke="#203a90" stroke-width="1.2"/></svg>
<div style="left:466px;top:80px;width:16px;height:14px;background:#000"></div>
<svg style="left:466px;top:78px" width="16" height="18"><path d="M8.5 0V18 M3 9.5h3 M11 9.5h3 M6.5 7.5l4 4 M10.5 7.5l-4 4" stroke="#ff2020" stroke-width="1" fill="none"/></svg>
<div style="left:483px;top:79px;width:34px;height:16px;background:#ffff00"></div>
<span class="t" style="left:486px;top:80.6px;font-size:11px;line-height:13px;">ROI_2</span>
<span class="t" style="left:552px;top:80.6px;font-size:11.2px;line-height:13px;">1.195m</span>
<span class="t" style="left:607px;top:80.6px;font-size:11.2px;line-height:13px;">26.90m</span>
<div style="left:434px;top:122px;width:248px;height:2px;background:#8c8c8c"></div>
<div style="left:0px;top:124px;width:682px;height:2px;background:#d2d2d2"></div>
<div style="left:0px;top:125px;width:680px;height:334px;background:#c0c0c0"></div>
<div style="left:0px;top:125px;width:3px;height:334px;background:#cbcbcb"></div>
<div style="left:655px;top:125px;width:25px;height:334px;background:linear-gradient(90deg,rgba(0,0,0,0),rgba(0,0,0,0.06) 50%,rgba(0,0,0,0.3))"></div>
<div style="left:680px;top:123px;width:2px;height:336px;background:#777"></div>
<div style="left:87px;top:132px;width:575px;height:1px;background:#8a8a8a"></div>
<div style="left:87px;top:132px;width:1px;height:287px;background:#8a8a8a"></div>
<div style="left:87px;top:133px;width:575px;height:1px;background:#3a3a3a"></div>
<svg style="left:88px;top:133px" width="574" height="285" shape-rendering="crispEdges"><rect width="574" height="285" fill="#000"/><path d="M7.5 0V285M14.5 0V285M21.5 0V285M29.5 0V285M36.5 0V285M43.5 0V285M50.5 0V285M64.5 0V285M72.5 0V285M79.5 0V285M86.5 0V285M93.5 0V285M100.5 0V285M107.5 0V285M122.5 0V285M129.5 0V285M136.5 0V285M143.5 0V285M150.5 0V285M158.5 0V285M165.5 0V285M179.5 0V285M186.5 0V285M193.5 0V285M201.5 0V285M208.5 0V285M215.5 0V285M222.5 0V285M236.5 0V285M244.5 0V285M251.5 0V285M258.5 0V285M265.5 0V285M272.5 0V285M279.5 0V285M294.5 0V285M301.5 0V285M308.5 0V285M315.5 0V285M322.5 0V285M329.5 0V285M337.5 0V285M351.5 0V285M358.5 0V285M365.5 0V285M372.5 0V285M380.5 0V285M387.5 0V285M394.5 0V285M408.5 0V285M415.5 0V285M423.5 0V285M430.5 0V285M437.5 0V285M444.5 0V285M451.5 0V285M466.5 0V285M473.5 0V285M480.5 0V285M487.5 0V285M494.5 0V285M501.5 0V285M509.5 0V285M523.5 0V285M530.5 0V285M537.5 0V285M544.5 0V285M552.5 0V285M559.5 0V285M566.5 0V285M0 7.5H574M0 12.5H574M0 18.5H574M0 24.5H574M0 35.5H574M0 41.5H574M0 46.5H574M0 52.5H574M0 63.5H574M0 69.5H574M0 75.5H574M0 80.5H574M0 92.5H574M0 97.5H574M0 103.5H574M0 109.5H574M0 120.5H574M0 126.5H574M0 131.5H574M0 137.5H574M0 148.5H574M0 154.5H574M0 159.5H574M0 165.5H574M0 176.5H574M0 182.5H574M0 188.5H574M0 193.5H574M0 205.5H574M0 210.5H574M0 216.5H574M0 222.5H574M0 233.5H574M0 239.5H574M0 244.5H574M0 250.5H574M0 261.5H574M0 267.5H574M0 273.5H574M0 278.5H574" stroke="#003400" stroke-width="1"/><path d="M57.5 0V285M115.5 0V285M172.5 0V285M229.5 0V285M286.5 0V285M344.5 0V285M401.5 0V285M458.5 0V285M516.5 0V285M0 29.5H574M0 58.5H574M0 86.5H574M0 114.5H574M0 142.5H574M0 171.5H574M0 199.5H574M0 227.5H574M0 256.5H574" stroke="#006c00" stroke-width="1"/><rect x="0" y="0" width="574" height="1" fill="#333"/><path d="M0.5 255.0 L1.5 255.0 L2.5 255.0 L3.5 254.5 L4.5 255.0 L5.5 255.0 L6.5 254.5 L7.5 255.0 L8.5 255.0 L9.5 255.0 L10.5 254.5 L11.5 254.5 L12.5 255.5 L13.5 255.0 L14.5 255.0 L15.5 255.0 L16.5 255.5 L17.5 255.0 L18.5 255.0 L19.5 255.0 L20.5 255.0 L21.5 255.0 L22.5 255.0 L23.5 255.0 L24.5 254.5 L25.5 255.5 L26.5 255.5 L27.5 255.5 L28.5 254.5 L29.5 255.0 L30.5 255.0 L31.5 255.0 L32.5 255.0 L33.5 255.0 L34.5 254.5 L35.5 255.0 L36.5 255.0 L37.5 255.5 L38.5 255.0 L39.5 255.5 L40.5 255.5 L41.5 255.0 L42.5 255.5 L43.5 255.0 L44.5 255.0 L45.5 255.0 L46.5 255.0 L47.5 255.0 L48.5 255.0 L49.5 255.0 L50.5 255.0 L51.5 255.0 L52.5 255.0 L53.5 255.0 L54.5 255.0 L55.5 254.5 L56.5 254.5 L57.5 255.0 L58.5 255.0 L59.5 255.0 L60.5 255.5 L61.5 255.0 L62.5 255.0 L63.5 255.0 L64.5 255.5 L65.5 255.5 L66.5 255.0 L67.5 255.0 L68.5 255.0 L69.5 255.5 L70.5 255.0 L71.5 255.0 L72.5 255.0 L73.5 255.0 L74.5 255.0 L75.5 255.0 L76.5 255.0 L77.5 255.0 L78.5 255.0 L79.5 255.0 L80.5 255.5 L81.5 255.0 L82.5 255.0 L83.5 255.0 L84.5 255.0 L85.5 255.0 L86.5 255.0 L87.5 255.0 L88.5 255.0 L89.5 255.5 L90.5 255.5 L91.5 254.5 L92.5 255.5 L93.5 255.0 L94.5 255.0 L95.5 255.5 L96.5 255.0 L97.5 255.0 L98.5 255.5 L99.5 255.0 L100.5 255.0 L101.5 255.0 L102.5 255.0 L103.5 255.5 L104.5 255.0 L105.5 255.0 L106.5 255.5 L107.5 255.0 L108.5 255.0 L109.5 255.0 L110.5 254.5 L111.5 255.0 L112.5 255.0 L113.5 255.0 L114.5 254.5 L115.5 255.0 L116.5 255.0 L117.5 255.0 L118.5 255.0 L119.5 255.0 L120.5 254.5 L121.5 255.0 L122.5 255.0 L123.5 255.0 L124.5 255.0 L125.5 255.0 L126.5 255.0 L127.5 255.0 L128.5 255.0 L129.5 255.0 L130.5 255.5 L131.5 255.0 L132.5 255.0 L133.5 255.0 L134.5 255.0 L135.5 255.0 L136.5 255.0 L137.5 255.0 L138.5 255.0 L139.5 255.0 L140.5 255.5 L141.5 255.0 L142.5 255.0 L143.5 255.0 L144.5 255.0 L145.5 255.0 L146.5 254.5 L147.5 255.0 L148.5 255.0 L149.5 255.0 L150.5 255.0 L151.5 254.5 L152.5 255.0 L153.5 255.0 L154.5 255.0 L155.5 255.0 L156.5 255.0 L157.5 255.0 L158.5 255.0 L159.5 255.0 L160.5 255.0 L161.5 255.0 L162.5 255.0 L163.5 255.0 L164.5 255.5 L165.5 255.0 L166.5 255.0 L167.5 254.5 L168.5 255.0 L169.5 255.5 L170.5 255.0 L171.5 255.5 L172.5 255.5 L173.5 255.0 L174.5 255.5 L175.5 255.0 L176.5 255.0 L177.5 255.0 L178.5 254.5 L179.5 255.5 L180.5 255.0 L181.5 255.0 L182.5 254.5 L183.5 255.0 L184.5 255.0 L185.5 255.0 L186.5 255.0 L187.5 255.0 L188.5 255.0 L189.5 255.0 L190.5 255.0 L191.5 255.0 L192.5 255.0 L193.5 255.5 L194.5 255.0 L195.5 255.0 L196.5 254.5 L197.5 255.0 L198.5 255.0 L199.5 255.0 L200.5 255.0 L201.5 255.0 L202.5 255.5 L203.5 255.0 L204.5 255.0 L205.5 255.0 L206.5 255.0 L207.5 255.0 L208.5 254.5 L209.5 255.0 L210.5 255.0 L211.5 255.0 L212.5 255.0 L213.5 255.0 L214.5 255.0 L215.5 255.0 L216.5 255.0 L217.5 255.0 L218.5 255.0 L219.5 255.0 L220.5 254.5 L221.5 255.5 L222.5 255.0 L223.5 255.0 L224.5 255.0 L225.5 255.0 L226.5 255.5 L227.5 255.0 L228.5 254.5 L229.5 255.0 L230.5 255.0 L231.5 255.0 L232.5 255.0 L233.5 255.0 L234.5 255.0 L235.5 255.0 L236.5 255.0 L237.5 254.5 L238.5 255.0 L239.5 255.0 L240.5 254.5 L241.5 255.0 L242.5 255.0 L243.5 255.0 L244.5 255.0 L245.5 255.0 L246.5 255.5 L247.5 255.5 L248.5 255.0 L249.5 255.0 L250.5 255.0 L251.5 255.0 L252.5 255.0 L253.5 255.5 L254.5 255.0 L255.5 255.0 L256.5 255.0 L257.5 255.5 L258.5 255.0 L259.5 255.0 L260.5 255.0 L261.5 255.0 L262.5 254.5 L263.5 255.5 L264.5 255.0 L265.5 255.5 L266.5 255.0 L267.5 255.0 L268.5 254.5 L269.5 255.0 L270.5 255.5 L271.5 255.5 L272.5 254.5 L273.5 255.0 L274.5 255.0 L275.5 255.0 L276.5 255.0 L277.5 255.0 L278.5 255.5 L279.5 255.0 L280.5 255.5 L281.5 255.0 L282.5 255.0 L283.5 255.0 L284.5 255.0 L285.5 255.0 L286.5 255.0 L287.5 254.5 L288.5 255.0 L289.5 255.5 L290.5 255.0 L291.5 255.0 L291.5 258.0 L292.5 255.0 L293.4 255.0 L293.4 27.0 L294.5 19.0 L295.5 9.0 L296.5 4.0 L298.0 3.0 L300.5 3.0 L302.0 4.8 L303.5 7.7 L304.5 8.9 L305.5 10.0 L306.5 11.2 L307.5 12.3 L308.5 13.5 L309.5 14.6 L310.5 15.7 L311.5 16.8 L312.5 18.0 L313.5 19.1 L314.5 20.2 L315.5 21.3 L316.5 22.4 L317.5 23.5 L318.5 24.5 L319.5 25.6 L320.5 26.7 L321.5 27.8 L322.5 28.8 L323.5 29.9 L324.5 31.0 L325.5 32.0 L326.5 33.1 L327.5 34.1 L328.5 35.1 L329.5 36.2 L330.5 37.2 L331.5 38.2 L332.5 39.2 L333.5 40.2 L334.5 41.2 L335.5 42.2 L336.5 43.2 L337.5 44.2 L338.5 45.2 L339.5 46.2 L340.5 47.2 L341.5 48.2 L342.5 49.1 L343.5 50.1 L344.5 51.1 L345.5 52.0 L346.5 53.0 L347.5 53.9 L348.5 54.9 L349.5 55.8 L350.5 56.7 L351.5 57.7 L352.5 58.6 L353.5 59.5 L354.5 60.4 L355.5 61.3 L356.5 62.2 L357.5 63.2 L358.5 64.1 L359.5 64.9 L360.5 65.8 L361.5 66.7 L362.5 67.6 L363.5 68.5 L364.5 69.4 L365.5 70.2 L366.5 71.1 L367.5 72.0 L368.5 72.8 L369.5 73.7 L370.5 74.5 L371.5 75.4 L372.5 76.2 L373.5 77.1 L374.5 77.9 L375.5 78.7 L376.5 79.5 L377.5 80.4 L378.5 81.2 L379.5 82.0 L380.5 82.8 L381.5 83.6 L382.5 84.4 L383.5 85.2 L384.5 86.0 L385.5 86.8 L386.5 87.6 L387.5 88.4 L388.5 89.2 L389.5 89.9 L390.5 90.7 L391.5 91.5 L392.5 92.3 L393.5 93.0 L394.5 93.8 L395.5 94.5 L396.5 95.3 L397.5 96.0 L398.5 96.8 L399.5 97.5 L400.5 98.3 L401.5 99.0 L402.5 99.7 L403.5 100.5 L404.5 101.2 L405.5 101.9 L406.5 102.6 L407.5 103.3 L408.5 104.1 L409.5 104.8 L410.5 105.5 L411.5 106.2 L412.5 106.9 L413.5 107.6 L414.5 108.3 L415.5 108.9 L416.5 109.6 L417.5 110.3 L418.5 111.0 L419.5 111.7 L420.5 112.3 L421.5 113.0 L422.5 113.7 L423.5 114.3 L424.5 115.0 L425.5 115.6 L426.5 116.3 L427.5 117.0 L428.5 117.6 L429.5 118.2 L430.5 118.9 L431.5 119.5 L432.5 120.2 L433.5 120.8 L434.5 121.4 L435.5 122.0 L436.5 122.7 L437.5 123.3 L438.5 123.9 L439.5 124.5 L440.5 125.1 L441.5 125.7 L442.5 126.4 L443.5 127.0 L444.5 127.6 L445.5 128.2 L446.5 128.7 L447.5 129.3 L448.5 129.9 L449.5 130.5 L450.5 131.1 L451.5 131.7 L452.5 132.3 L453.5 132.8 L454.5 133.4 L455.5 134.0 L456.5 134.5 L457.5 135.1 L458.5 135.7 L459.5 136.2 L460.5 136.8 L461.5 137.3 L462.5 137.9 L463.5 138.4 L464.5 139.0 L465.5 139.5 L466.5 140.1 L467.5 140.6 L468.5 141.2 L469.5 141.7 L470.5 142.2 L471.5 142.7 L472.5 143.3 L473.5 143.8 L474.5 144.3 L475.5 144.8 L476.5 145.4 L477.5 145.9 L478.5 146.4 L479.5 146.9 L480.5 147.4 L481.5 147.9 L482.5 148.4 L483.5 148.9 L484.5 149.4 L485.5 149.9 L486.5 150.4 L487.5 150.9 L488.5 151.4 L489.5 151.9 L490.5 152.3 L491.5 152.8 L492.5 153.3 L493.5 153.8 L494.5 154.3 L495.5 154.7 L496.5 155.2 L497.5 155.7 L498.5 156.1 L499.5 156.6 L500.5 157.1 L501.5 157.5 L502.5 158.0 L503.5 158.4 L504.5 158.9 L505.5 159.3 L506.5 159.8 L507.5 160.2 L508.5 160.7 L509.5 161.1 L510.5 161.6 L511.5 162.0 L512.5 162.4 L513.5 162.9 L514.5 163.3 L515.5 163.7 L516.5 164.2 L517.5 164.6 L518.5 165.0 L519.5 165.4 L520.5 165.8 L521.5 166.3 L522.5 166.7 L523.5 167.1 L524.5 167.5 L525.5 167.9 L526.5 168.3 L527.5 168.7 L528.5 169.1 L529.5 169.5 L530.5 169.9 L531.5 170.3 L532.5 170.7 L533.5 171.1 L534.5 171.5 L535.5 171.9 L536.5 172.3 L537.5 172.7 L538.5 173.1 L539.5 173.5 L540.5 173.8 L541.5 174.2 L542.5 174.6 L543.5 175.0 L544.5 175.4 L545.5 175.7 L546.5 176.1 L547.5 176.5 L548.5 176.8 L549.5 177.2 L550.5 177.6 L551.5 177.9 L552.5 178.3 L553.5 178.7 L554.5 179.0 L555.5 179.4 L556.5 179.7 L557.5 180.1 L558.5 180.4 L559.5 180.8 L560.5 181.1 L561.5 181.5 L562.5 181.8 L563.5 182.2 L564.5 182.5 L565.5 182.8 L566.5 183.2 L567.5 183.5 L568.5 183.9 L569.5 184.2 L570.5 184.5 L571.5 184.9 L572.5 185.2 L573.5 185.5" stroke="#fff" stroke-width="1.4" fill="none" shape-rendering="geometricPrecision"/></svg>
<div style="left:88px;top:418px;width:575px;height:1px;background:#e6e6e6"></div>
<div style="left:662px;top:133px;width:1px;height:286px;background:#e0e0e0"></div>
<div style="left:81px;top:134px;width:6px;height:1px;background:#000"></div>
<span class="t" style="right:1046px;top:127.3px;font-size:11.8px;line-height:14px;">4.500</span>
<div style="left:81px;top:162px;width:6px;height:1px;background:#000"></div>
<span class="t" style="right:1046px;top:155.6px;font-size:11.8px;line-height:14px;">4.000</span>
<div style="left:81px;top:191px;width:6px;height:1px;background:#000"></div>
<span class="t" style="right:1046px;top:183.9px;font-size:11.8px;line-height:14px;">3.500</span>
<div style="left:81px;top:219px;width:6px;height:1px;background:#000"></div>
<span class="t" style="right:1046px;top:212.2px;font-size:11.8px;line-height:14px;">3.000</span>
<div style="left:81px;top:247px;width:6px;height:1px;background:#000"></div>
<span class="t" style="right:1046px;top:240.5px;font-size:11.8px;line-height:14px;">2.500</span>
<div style="left:81px;top:276px;width:6px;height:1px;background:#000"></div>
<span class="t" style="right:1046px;top:268.8px;font-size:11.8px;line-height:14px;">2.000</span>
<div style="left:81px;top:304px;width:6px;height:1px;background:#000"></div>
<span class="t" style="right:1046px;top:297.1px;font-size:11.8px;line-height:14px;">1.500</span>
<div style="left:81px;top:332px;width:6px;height:1px;background:#000"></div>
<span class="t" style="right:1046px;top:325.4px;font-size:11.8px;line-height:14px;">1.000</span>
<div style="left:81px;top:361px;width:6px;height:1px;background:#000"></div>
<span class="t" style="right:1046px;top:353.7px;font-size:11.8px;line-height:14px;">500.0m</span>
<div style="left:81px;top:389px;width:6px;height:1px;background:#000"></div>
<span class="t" style="right:1046px;top:382.0px;font-size:11.8px;line-height:14px;">0.000</span>
<div style="left:81px;top:417px;width:6px;height:1px;background:#000"></div>
<span class="t" style="right:1046px;top:410.3px;font-size:11.8px;line-height:14px;">-500.0m</span>
<div style="left:88px;top:420px;width:1px;height:5px;background:#000"></div>
<span class="t" style="left:-111.7px;width:400px;text-align:center;top:426.1px;font-size:11.8px;line-height:14px;">1.700m</span>
<div style="left:146px;top:420px;width:1px;height:5px;background:#000"></div>
<span class="t" style="left:-54.400000000000006px;width:400px;text-align:center;top:426.1px;font-size:11.8px;line-height:14px;">1.720m</span>
<div style="left:203px;top:420px;width:1px;height:5px;background:#000"></div>
<span class="t" style="left:2.8999999999999773px;width:400px;text-align:center;top:426.1px;font-size:11.8px;line-height:14px;">1.740m</span>
<div style="left:260px;top:420px;width:1px;height:5px;background:#000"></div>
<span class="t" style="left:60.19999999999999px;width:400px;text-align:center;top:426.1px;font-size:11.8px;line-height:14px;">1.760m</span>
<div style="left:318px;top:420px;width:1px;height:5px;background:#000"></div>
<span class="t" style="left:117.5px;width:400px;text-align:center;top:426.1px;font-size:11.8px;line-height:14px;">1.780m</span>
<div style="left:375px;top:420px;width:1px;height:5px;background:#000"></div>
<span class="t" style="left:174.8px;width:400px;text-align:center;top:426.1px;font-size:11.8px;line-height:14px;">1.800m</span>
<div style="left:432px;top:420px;width:1px;height:5px;background:#000"></div>
<span class="t" style="left:232.09999999999997px;width:400px;text-align:center;top:426.1px;font-size:11.8px;line-height:14px;">1.820m</span>
<div style="left:489px;top:420px;width:1px;height:5px;background:#000"></div>
<span class="t" style="left:289.4px;width:400px;text-align:center;top:426.1px;font-size:11.8px;line-height:14px;">1.840m</span>
<div style="left:547px;top:420px;width:1px;height:5px;background:#000"></div>
<span class="t" style="left:346.69999999999993px;width:400px;text-align:center;top:426.1px;font-size:11.8px;line-height:14px;">1.860m</span>
<div style="left:604px;top:420px;width:1px;height:5px;background:#000"></div>
<span class="t" style="left:403.9999999999999px;width:400px;text-align:center;top:426.1px;font-size:11.8px;line-height:14px;">1.880m</span>
<div style="left:661px;top:420px;width:1px;height:5px;background:#000"></div>
<span class="t" style="left:461.29999999999995px;width:400px;text-align:center;top:426.1px;font-size:11.8px;line-height:14px;">1.900m</span>
<span class="t" style="left:178px;width:400px;text-align:center;top:443.6px;font-size:11.5px;line-height:13px;">Time (s)</span>
<span class="t" style="left:-10px;top:269px;width:70px;text-align:center;font-size:11.8px;line-height:14px;transform:rotate(-90deg)">Amplitude (V)</span>
<div style="left:0px;top:459px;width:682px;height:33px;background:#b6b6b6"></div>
<div style="left:0px;top:459px;width:680px;height:1px;background:#a4a4a4"></div>
<div style="left:0px;top:461px;width:80px;height:24px;background:linear-gradient(90deg,#c4c4c4,#cacaca 85%,#9a9a9a)"></div>
<div style="left:4px;top:465px;width:20px;height:16px;background:#8c8c8c;border:1px solid #6a6a6a;box-sizing:border-box"></div>
<div style="left:26px;top:465px;width:19px;height:16px;background:#bdbdbd;border-right:1px solid #9a9a9a;border-bottom:1px solid #9a9a9a;box-sizing:border-box"></div>
<div style="left:47px;top:465px;width:19px;height:16px;background:#bdbdbd;border-right:1px solid #9a9a9a;border-bottom:1px solid #9a9a9a;box-sizing:border-box"></div>
<svg style="left:0px;top:461px" width="70" height="24"><path d="M14.5 6V19 M7 12.5H22" stroke="#000" stroke-width="1"/><circle cx="14.5" cy="12.5" r="1.6" fill="#8c8c8c" stroke="#000"/><rect x="7" y="7" width="2" height="2" fill="#40ff40"/><circle cx="37.5" cy="10.5" r="4" fill="#dcdcff" stroke="#000" stroke-width="1.2"/><path d="M37.5 8V13 M35 10.5H40" stroke="#000" stroke-width="1.2"/><path d="M34.5 13.5L29.5 18.5" stroke="#000" stroke-width="2"/><path d="M37 16H42L39.5 19Z" fill="#000"/><rect x="28" y="7" width="2" height="2" fill="#2a8a2a"/><path d="M52.5 14 L50 11.5 C49.5 10.5 50.5 10 51.5 11 L53 12.5 V7.5 A0.8 0.8 0 0 1 54.6 7.5 V11 M54.6 11 V6.3 A0.8 0.8 0 0 1 56.2 6.3 V11 M56.2 11 V6.8 A0.8 0.8 0 0 1 57.8 6.8 V11 M57.8 11.5 V8 A0.8 0.8 0 0 1 59.4 8 V14 C59.4 17 58 19 55.5 19 C54 19 53 17 52.5 14" fill="#fff" stroke="#000" stroke-width="0.9"/><rect x="49" y="7" width="2" height="2" fill="#2a8a2a"/></svg>
<span class="t" style="left:90px;top:465.6px;font-size:11px;line-height:13px;">FC trace</span>
<div style="left:184px;top:467px;width:94px;height:24px;background:linear-gradient(#d4d4d4,#c2c2c2);border:1px solid #333;box-sizing:border-box;box-shadow:inset 1px 1px 0 #eee, inset -2px -2px 0 #8a8a8a"></div>
<span class="t" style="left:31px;width:400px;text-align:center;top:472.6px;font-size:11.6px;line-height:13px;">Get V and dV/dt</span>
<span class="t" style="left:291px;top:469.6px;font-size:11.2px;line-height:13px;">slope</span>
<div style="left:321px;top:468px;width:48px;height:22px;box-sizing:border-box;border-style:solid;border-width:3px 3px 3px 3px;border-color:#8e8e8e #c8c8c8 #c6c6c6 #a0a0a0;background:#d4d4d4"></div>
<span class="t" style="left:328px;top:472.6px;font-size:11.5px;line-height:13px;">931</span>
<span class="t" style="left:384px;top:469.1px;font-size:12.1px;line-height:14px;">intercept</span>
<div style="left:436px;top:468px;width:51px;height:22px;box-sizing:border-box;border-style:solid;border-width:3px 3px 3px 3px;border-color:#8e8e8e #c8c8c8 #c6c6c6 #a0a0a0;background:#d4d4d4"></div>
<span class="t" style="left:441px;top:472.6px;font-size:11.5px;line-height:13px;">-5.85</span>
<div style="left:507px;top:461px;width:83px;height:23px;background:linear-gradient(90deg,#bdbdbd,#cfcfcf 20%,#c8c8c8 70%,#9a9a9a)"></div>
<span class="t" style="left:521px;top:465.1px;font-size:11.8px;line-height:14px;">FC</span>
<div style="left:547px;top:463px;width:29px;height:18px;background:#000;border:1px solid #555;box-sizing:border-box"></div>
<svg style="left:547px;top:463px" width="29" height="18"><path d="M3 15 L11 5 L17 13 L26 4" stroke="#fff" fill="none" stroke-width="1"/></svg>
<div style="left:592px;top:471px;width:89px;height:21px;background:linear-gradient(90deg,#bdbdbd,#cfcfcf 20%,#c8c8c8 70%,#a8a8a8)"></div>
<span class="t" style="left:606px;top:474.6px;font-size:11.4px;line-height:13px;">Scint</span>
<div style="left:643px;top:473px;width:28px;height:18px;background:#000"></div>
<svg style="left:643px;top:473px" width="28" height="18"><path d="M3 13 L10 3 L17 12 L26 3" stroke="#60ff30" fill="none" stroke-width="1"/><path d="M8 3h4 M10 1v4 M15 12h4 M17 10v4 M1 13h4 M3 11v4 M24 3h4 M26 1v4" stroke="#60ff30" stroke-width="1"/></svg>
<div style="left:0px;top:492px;width:682px;height:16px;background:#d3d3d3"></div>
<div style="left:0px;top:492px;width:682px;height:1px;background:#f4f4f4"></div>
<div style="left:139px;top:493px;width:17px;height:15px;background:#efefef"></div>
<svg style="left:141px;top:494px" width="12" height="12"><path d="M8 2 L4 6 L8 10" stroke="#444" stroke-width="1.5" fill="none"/></svg>
<div style="left:0px;top:492px;width:139px;height:17px;background:#fff;border:1px solid #000;box-sizing:border-box"></div>
<span class="t" style="left:1px;top:493.6px;font-size:12.1px;line-height:14px;">9775.lvproj/My Computer</span>
<div style="left:682px;top:0px;width:443px;height:502px;background:#e3e3e3"></div>
<div style="left:682px;top:0px;width:1px;height:502px;background:#6e6e6e"></div>
<div style="left:683px;top:0px;width:442px;height:27px;background:#f0f0f0"></div>
<div style="left:683px;top:0px;width:442px;height:1px;background:#a0a0a0"></div>
<div style="left:683px;top:26px;width:442px;height:1px;background:#a0a0a0"></div>
<svg style="left:730px;top:2px" width="100" height="24"><path d="M15.1 5.7 L22 12.3 L15.1 18.8Z" fill="#000"/><rect x="11" y="10" width="4.2" height="4.9" fill="#000"/><rect x="11" y="5.9" width="1" height="3" fill="#000"/><rect x="13" y="5.9" width="1" height="3" fill="#000"/><rect x="11" y="16" width="1" height="3" fill="#000"/><rect x="13" y="16" width="1" height="3" fill="#000"/><rect x="7" y="10" width="1" height="5" fill="#000"/><rect x="9" y="10" width="1" height="5" fill="#000"/><path d="M31.5 5.8 H38.5 Q40.5 6 40.5 9 V11 H42.5 L39.5 15 L36.5 11 H38.3 V9.5 Q38.3 8.5 37 8.5 H34Z" fill="#fff" stroke="#000" stroke-width="1.1"/><path d="M38.5 18.8 H31.5 Q29.5 18.6 29.5 15.5 V13.5 H27.5 L30.5 9.5 L33.5 13.5 H31.7 V15 Q31.7 16 33 16 H36Z" fill="#fff" stroke="#000" stroke-width="1.1"/><path d="M32 6 L40 18.8" stroke="#000" stroke-width="1.2"/><path d="M58.3 4.8 H64.7 L69.2 9.3 V15.7 L64.7 20.2 H58.3 L53.8 15.7 V9.3Z" fill="#fff" stroke="#000" stroke-width="1.1"/><circle cx="61.5" cy="12.5" r="6" fill="#b52020"/><path d="M55.5 12.5 A6 6 0 0 1 67.5 12.5Z" fill="#c84545"/><rect x="77.8" y="7.1" width="3.5" height="9.8" fill="#000"/><rect x="83.6" y="7.1" width="3.5" height="9.8" fill="#000"/></svg>
<div style="left:1087px;top:5px;width:19px;height:18px;background:#c8c8c8;border-left:1px solid #5a5a5a;border-top:1px solid #5a5a5a;box-sizing:border-box"></div>
<svg style="left:1087px;top:5px" width="19" height="18"><path d="M5.5 6 C5.5 3 8 2 10 2 C12.5 2 14 3.5 14 5.5 C14 8 11 8.5 10.5 11 V12" fill="none" stroke="#333" stroke-width="2.6" transform="translate(0.8,0.8)"/><circle cx="11.3" cy="15.3" r="1.6" fill="#333"/><path d="M5.5 6 C5.5 3 8 2 10 2 C12.5 2 14 3.5 14 5.5 C14 8 11 8.5 10.5 11 V12" fill="none" stroke="#ffff00" stroke-width="2.2"/><circle cx="10.5" cy="14.6" r="1.5" fill="#ffff00"/></svg>
<div style="left:1110px;top:0px;width:1px;height:27px;background:#777"></div>
<div style="left:1111px;top:0px;width:14px;height:26px;background:#f0f0f0"></div>
<div style="left:1112px;top:0px;width:13px;height:19px;background:#fff;border:1px solid #000;border-top:none;border-right:none;box-sizing:border-box"></div>
<svg style="left:1113px;top:0px" width="12" height="18"><rect x="0" y="0" width="12" height="5" fill="#c8c8a0"/><path d="M0 5 H12" stroke="#000"/><path d="M1 3 Q6 11 12 8" stroke="#00c" fill="none" stroke-width="1"/><circle cx="9" cy="6" r="2" fill="none" stroke="#f00"/></svg>
<span class="t" style="left:702px;top:37.1px;font-size:11.75px;line-height:14px;">Intensity Graph</span>
<div style="left:702px;top:56px;width:366px;height:303px;background:linear-gradient(#e9e9e9,#d6d6d6);border:1px solid #9c9c9c;border-radius:4px;box-sizing:border-box;box-shadow:1px 1px 1px #b0b0b0"></div>
<svg style="left:741px;top:71px" width="305" height="256" shape-rendering="crispEdges"><rect width="305" height="256" fill="#000"/><rect x="19.1" y="0.0" width="2.2" height="2.8" fill="rgb(9, 0, 0)"/><rect x="247.8" y="0.0" width="2.2" height="2.8" fill="rgb(14, 0, 0)"/><rect x="7.6" y="2.5" width="2.2" height="2.8" fill="rgb(10, 0, 0)"/><rect x="80.1" y="2.5" width="2.2" height="2.8" fill="rgb(14, 0, 0)"/><rect x="150.6" y="2.5" width="2.2" height="2.8" fill="rgb(8, 0, 0)"/><rect x="230.7" y="2.5" width="2.2" height="2.8" fill="rgb(11, 0, 0)"/><rect x="240.2" y="2.5" width="2.2" height="2.8" fill="rgb(12, 0, 0)"/><rect x="276.4" y="2.5" width="2.2" height="2.8" fill="rgb(12, 0, 0)"/><rect x="89.6" y="5.1" width="2.2" height="2.8" fill="rgb(8, 0, 0)"/><rect x="198.2" y="5.1" width="2.2" height="2.8" fill="rgb(14, 0, 0)"/><rect x="26.7" y="7.6" width="2.2" height="2.8" fill="rgb(14, 0, 0)"/><rect x="47.7" y="10.2" width="2.2" height="2.8" fill="rgb(8, 0, 0)"/><rect x="148.7" y="15.2" width="2.2" height="2.8" fill="rgb(13, 0, 0)"/><rect x="209.7" y="17.8" width="2.2" height="2.8" fill="rgb(20, 0, 0)"/><rect x="11.4" y="20.3" width="2.2" height="2.8" fill="rgb(18, 0, 0)"/><rect x="158.2" y="20.3" width="2.2" height="2.8" fill="rgb(16, 0, 0)"/><rect x="181.1" y="20.3" width="2.2" height="2.8" fill="rgb(17, 0, 0)"/><rect x="72.4" y="22.9" width="2.2" height="2.8" fill="rgb(20, 0, 0)"/><rect x="62.9" y="25.4" width="2.2" height="2.8" fill="rgb(14, 0, 0)"/><rect x="19.1" y="27.9" width="2.2" height="2.8" fill="rgb(12, 0, 0)"/><rect x="95.3" y="33.0" width="2.2" height="2.8" fill="rgb(15, 0, 0)"/><rect x="154.4" y="33.0" width="2.2" height="2.8" fill="rgb(12, 0, 0)"/><rect x="244.0" y="33.0" width="2.2" height="2.8" fill="rgb(20, 0, 0)"/><rect x="297.4" y="33.0" width="2.2" height="2.8" fill="rgb(8, 0, 0)"/><rect x="299.3" y="33.0" width="2.2" height="2.8" fill="rgb(14, 0, 0)"/><rect x="51.5" y="35.6" width="2.2" height="2.8" fill="rgb(11, 0, 0)"/><rect x="190.6" y="35.6" width="2.2" height="2.8" fill="rgb(9, 0, 0)"/><rect x="263.1" y="35.6" width="2.2" height="2.8" fill="rgb(18, 0, 0)"/><rect x="282.1" y="35.6" width="2.2" height="2.8" fill="rgb(8, 0, 0)"/><rect x="131.5" y="38.1" width="2.2" height="2.8" fill="rgb(15, 0, 0)"/><rect x="204.0" y="38.1" width="2.2" height="2.8" fill="rgb(16, 0, 0)"/><rect x="234.5" y="38.1" width="2.2" height="2.8" fill="rgb(8, 0, 0)"/><rect x="30.5" y="43.2" width="2.2" height="2.8" fill="rgb(19, 0, 0)"/><rect x="263.1" y="43.2" width="2.2" height="2.8" fill="rgb(8, 0, 0)"/><rect x="36.2" y="45.7" width="2.2" height="2.8" fill="rgb(15, 0, 0)"/><rect x="62.9" y="45.7" width="2.2" height="2.8" fill="rgb(14, 0, 0)"/><rect x="144.9" y="48.3" width="2.2" height="2.8" fill="rgb(20, 0, 0)"/><rect x="152.5" y="48.3" width="2.2" height="2.8" fill="rgb(19, 0, 0)"/><rect x="223.0" y="48.3" width="2.2" height="2.8" fill="rgb(10, 0, 0)"/><rect x="24.8" y="50.8" width="2.2" height="2.8" fill="rgb(19, 0, 0)"/><rect x="104.8" y="50.8" width="2.2" height="2.8" fill="rgb(16, 0, 0)"/><rect x="135.3" y="50.8" width="2.2" height="2.8" fill="rgb(13, 0, 0)"/><rect x="175.4" y="50.8" width="2.2" height="2.8" fill="rgb(15, 0, 0)"/><rect x="30.5" y="53.3" width="2.2" height="2.8" fill="rgb(16, 0, 0)"/><rect x="112.5" y="53.3" width="2.2" height="2.8" fill="rgb(14, 0, 0)"/><rect x="183.0" y="53.3" width="2.2" height="2.8" fill="rgb(11, 0, 0)"/><rect x="192.5" y="53.3" width="2.2" height="2.8" fill="rgb(13, 0, 0)"/><rect x="156.3" y="55.9" width="2.2" height="2.8" fill="rgb(9, 0, 0)"/><rect x="184.9" y="55.9" width="2.2" height="2.8" fill="rgb(9, 0, 0)"/><rect x="215.4" y="55.9" width="2.2" height="2.8" fill="rgb(19, 0, 0)"/><rect x="156.3" y="58.4" width="2.2" height="2.8" fill="rgb(19, 0, 0)"/><rect x="133.4" y="63.5" width="2.2" height="2.8" fill="rgb(14, 0, 0)"/><rect x="154.4" y="63.5" width="2.2" height="2.8" fill="rgb(9, 0, 0)"/><rect x="204.0" y="63.5" width="2.2" height="2.8" fill="rgb(10, 0, 0)"/><rect x="80.1" y="66.0" width="2.2" height="2.8" fill="rgb(9, 0, 0)"/><rect x="91.5" y="66.0" width="2.2" height="2.8" fill="rgb(9, 0, 0)"/><rect x="137.2" y="66.0" width="2.2" height="2.8" fill="rgb(13, 0, 0)"/><rect x="276.4" y="66.0" width="2.2" height="2.8" fill="rgb(8, 0, 0)"/><rect x="284.0" y="68.6" width="2.2" height="2.8" fill="rgb(9, 0, 0)"/><rect x="169.7" y="71.1" width="2.2" height="2.8" fill="rgb(13, 0, 0)"/><rect x="59.1" y="73.7" width="2.2" height="2.8" fill="rgb(12, 0, 0)"/><rect x="106.8" y="73.7" width="2.2" height="2.8" fill="rgb(10, 0, 0)"/><rect x="125.8" y="73.7" width="2.2" height="2.8" fill="rgb(8, 0, 0)"/><rect x="169.7" y="73.7" width="2.2" height="2.8" fill="rgb(10, 0, 0)"/><rect x="255.4" y="73.7" width="2.2" height="2.8" fill="rgb(17, 0, 0)"/><rect x="278.3" y="73.7" width="2.2" height="2.8" fill="rgb(9, 0, 0)"/><rect x="274.5" y="76.2" width="2.2" height="2.8" fill="rgb(12, 0, 0)"/><rect x="102.9" y="78.7" width="2.2" height="2.8" fill="rgb(16, 0, 0)"/><rect x="129.6" y="78.7" width="2.2" height="2.8" fill="rgb(11, 0, 0)"/><rect x="287.8" y="78.7" width="2.2" height="2.8" fill="rgb(14, 0, 0)"/><rect x="53.4" y="81.3" width="2.2" height="2.8" fill="rgb(16, 0, 0)"/><rect x="102.9" y="81.3" width="2.2" height="2.8" fill="rgb(8, 0, 0)"/><rect x="22.9" y="83.8" width="2.2" height="2.8" fill="rgb(11, 0, 0)"/><rect x="163.9" y="83.8" width="2.2" height="2.8" fill="rgb(9, 0, 0)"/><rect x="293.6" y="83.8" width="2.2" height="2.8" fill="rgb(8, 0, 0)"/><rect x="1.9" y="86.4" width="2.2" height="2.8" fill="rgb(11, 0, 0)"/><rect x="80.1" y="86.4" width="2.2" height="2.8" fill="rgb(16, 0, 0)"/><rect x="24.8" y="88.9" width="2.2" height="2.8" fill="rgb(12, 0, 0)"/><rect x="211.6" y="88.9" width="2.2" height="2.8" fill="rgb(9, 0, 0)"/><rect x="255.4" y="88.9" width="2.2" height="2.8" fill="rgb(12, 0, 0)"/><rect x="280.2" y="88.9" width="2.2" height="2.8" fill="rgb(16, 0, 0)"/><rect x="1.9" y="91.4" width="2.2" height="2.8" fill="rgb(18, 0, 0)"/><rect x="179.2" y="91.4" width="2.2" height="2.8" fill="rgb(13, 0, 0)"/><rect x="141.1" y="94.0" width="2.2" height="2.8" fill="rgb(9, 0, 0)"/><rect x="143.0" y="94.0" width="2.2" height="2.8" fill="rgb(17, 0, 0)"/><rect x="196.3" y="94.0" width="2.2" height="2.8" fill="rgb(13, 0, 0)"/><rect x="19.1" y="96.5" width="2.2" height="2.8" fill="rgb(13, 0, 0)"/><rect x="80.1" y="96.5" width="2.2" height="2.8" fill="rgb(14, 0, 0)"/><rect x="91.5" y="96.5" width="2.2" height="2.8" fill="rgb(13, 0, 0)"/><rect x="204.0" y="96.5" width="2.2" height="2.8" fill="rgb(8, 0, 0)"/><rect x="13.3" y="99.1" width="2.2" height="2.8" fill="rgb(11, 0, 0)"/><rect x="43.8" y="99.1" width="2.2" height="2.8" fill="rgb(16, 0, 0)"/><rect x="146.8" y="99.1" width="2.2" height="2.8" fill="rgb(20, 0, 0)"/><rect x="167.8" y="99.1" width="2.2" height="2.8" fill="rgb(15, 0, 0)"/><rect x="251.6" y="99.1" width="2.2" height="2.8" fill="rgb(15, 0, 0)"/><rect x="265.0" y="99.1" width="2.2" height="2.8" fill="rgb(14, 0, 0)"/><rect x="47.7" y="101.6" width="2.2" height="2.8" fill="rgb(14, 0, 0)"/><rect x="114.4" y="101.6" width="2.2" height="2.8" fill="rgb(18, 0, 0)"/><rect x="230.7" y="101.6" width="2.2" height="2.8" fill="rgb(18, 0, 0)"/><rect x="36.2" y="104.1" width="2.2" height="2.8" fill="rgb(17, 0, 0)"/><rect x="102.9" y="104.1" width="2.2" height="2.8" fill="rgb(18, 0, 0)"/><rect x="17.2" y="106.7" width="2.2" height="2.8" fill="rgb(11, 0, 0)"/><rect x="144.9" y="106.7" width="2.2" height="2.8" fill="rgb(14, 0, 0)"/><rect x="190.6" y="106.7" width="2.2" height="2.8" fill="rgb(15, 0, 0)"/><rect x="295.5" y="109.2" width="2.2" height="2.8" fill="rgb(9, 0, 0)"/><rect x="104.8" y="111.8" width="2.2" height="2.8" fill="rgb(14, 0, 0)"/><rect x="221.1" y="111.8" width="2.2" height="2.8" fill="rgb(12, 0, 0)"/><rect x="30.5" y="114.3" width="2.2" height="2.8" fill="rgb(12, 0, 0)"/><rect x="150.6" y="114.3" width="2.2" height="2.8" fill="rgb(18, 0, 0)"/><rect x="184.9" y="114.3" width="2.2" height="2.8" fill="rgb(11, 0, 0)"/><rect x="24.8" y="116.8" width="2.2" height="2.8" fill="rgb(17, 0, 0)"/><rect x="120.1" y="116.8" width="2.2" height="2.8" fill="rgb(15, 0, 0)"/><rect x="297.4" y="116.8" width="2.2" height="2.8" fill="rgb(13, 0, 0)"/><rect x="7.6" y="121.9" width="2.2" height="2.8" fill="rgb(12, 0, 0)"/><rect x="186.8" y="121.9" width="2.2" height="2.8" fill="rgb(9, 0, 0)"/><rect x="70.5" y="124.5" width="2.2" height="2.8" fill="rgb(16, 0, 0)"/><rect x="102.9" y="124.5" width="2.2" height="2.8" fill="rgb(15, 0, 0)"/><rect x="66.7" y="127.0" width="2.2" height="2.8" fill="rgb(16, 0, 0)"/><rect x="236.4" y="129.5" width="2.2" height="2.8" fill="rgb(20, 0, 0)"/><rect x="299.3" y="129.5" width="2.2" height="2.8" fill="rgb(10, 0, 0)"/><rect x="104.8" y="132.1" width="2.2" height="2.8" fill="rgb(8, 0, 0)"/><rect x="95.3" y="137.2" width="2.2" height="2.8" fill="rgb(8, 0, 0)"/><rect x="127.7" y="137.2" width="2.2" height="2.8" fill="rgb(19, 0, 0)"/><rect x="301.2" y="137.2" width="2.2" height="2.8" fill="rgb(15, 0, 0)"/><rect x="200.2" y="139.7" width="2.2" height="2.8" fill="rgb(17, 0, 0)"/><rect x="204.0" y="139.7" width="2.2" height="2.8" fill="rgb(14, 0, 0)"/><rect x="242.1" y="139.7" width="2.2" height="2.8" fill="rgb(9, 0, 0)"/><rect x="74.3" y="142.2" width="2.2" height="2.8" fill="rgb(19, 0, 0)"/><rect x="154.4" y="142.2" width="2.2" height="2.8" fill="rgb(16, 0, 0)"/><rect x="238.3" y="142.2" width="2.2" height="2.8" fill="rgb(12, 0, 0)"/><rect x="106.8" y="144.8" width="2.2" height="2.8" fill="rgb(9, 0, 0)"/><rect x="108.7" y="144.8" width="2.2" height="2.8" fill="rgb(11, 0, 0)"/><rect x="110.6" y="144.8" width="2.2" height="2.8" fill="rgb(17, 0, 0)"/><rect x="112.5" y="144.8" width="2.2" height="2.8" fill="rgb(18, 0, 0)"/><rect x="114.4" y="144.8" width="2.2" height="2.8" fill="rgb(18, 0, 0)"/><rect x="116.3" y="144.8" width="2.2" height="2.8" fill="rgb(21, 0, 0)"/><rect x="118.2" y="144.8" width="2.2" height="2.8" fill="rgb(18, 0, 0)"/><rect x="120.1" y="144.8" width="2.2" height="2.8" fill="rgb(16, 0, 0)"/><rect x="122.0" y="144.8" width="2.2" height="2.8" fill="rgb(13, 0, 0)"/><rect x="123.9" y="144.8" width="2.2" height="2.8" fill="rgb(11, 0, 0)"/><rect x="125.8" y="144.8" width="2.2" height="2.8" fill="rgb(9, 0, 0)"/><rect x="204.0" y="144.8" width="2.2" height="2.8" fill="rgb(16, 0, 0)"/><rect x="7.6" y="147.3" width="2.2" height="2.8" fill="rgb(8, 0, 0)"/><rect x="102.9" y="147.3" width="2.2" height="2.8" fill="rgb(9, 0, 0)"/><rect x="104.8" y="147.3" width="2.2" height="2.8" fill="rgb(17, 0, 0)"/><rect x="106.8" y="147.3" width="2.2" height="2.8" fill="rgb(22, 0, 0)"/><rect x="108.7" y="147.3" width="2.2" height="2.8" fill="rgb(39, 0, 0)"/><rect x="110.6" y="147.3" width="2.2" height="2.8" fill="rgb(44, 0, 0)"/><rect x="112.5" y="147.3" width="2.2" height="2.8" fill="rgb(57, 0, 0)"/><rect x="114.4" y="147.3" width="2.2" height="2.8" fill="rgb(57, 0, 0)"/><rect x="116.3" y="147.3" width="2.2" height="2.8" fill="rgb(50, 0, 0)"/><rect x="118.2" y="147.3" width="2.2" height="2.8" fill="rgb(49, 0, 0)"/><rect x="120.1" y="147.3" width="2.2" height="2.8" fill="rgb(45, 0, 0)"/><rect x="122.0" y="147.3" width="2.2" height="2.8" fill="rgb(40, 0, 0)"/><rect x="123.9" y="147.3" width="2.2" height="2.8" fill="rgb(32, 0, 0)"/><rect x="125.8" y="147.3" width="2.2" height="2.8" fill="rgb(20, 0, 0)"/><rect x="127.7" y="147.3" width="2.2" height="2.8" fill="rgb(15, 0, 0)"/><rect x="209.7" y="147.3" width="2.2" height="2.8" fill="rgb(12, 0, 0)"/><rect x="101.0" y="149.9" width="2.2" height="2.8" fill="rgb(14, 0, 0)"/><rect x="102.9" y="149.9" width="2.2" height="2.8" fill="rgb(29, 0, 0)"/><rect x="104.8" y="149.9" width="2.2" height="2.8" fill="rgb(40, 0, 0)"/><rect x="106.8" y="149.9" width="2.2" height="2.8" fill="rgb(67, 0, 0)"/><rect x="108.7" y="149.9" width="2.2" height="2.8" fill="rgb(71, 0, 0)"/><rect x="110.6" y="149.9" width="2.2" height="2.8" fill="rgb(75, 0, 0)"/><rect x="112.5" y="149.9" width="2.2" height="2.8" fill="rgb(95, 0, 0)"/><rect x="114.4" y="149.9" width="2.2" height="2.8" fill="rgb(102, 0, 0)"/><rect x="116.3" y="149.9" width="2.2" height="2.8" fill="rgb(116, 0, 0)"/><rect x="118.2" y="149.9" width="2.2" height="2.8" fill="rgb(37, 0, 0)"/><rect x="120.1" y="149.9" width="2.2" height="2.8" fill="rgb(98, 0, 0)"/><rect x="122.0" y="149.9" width="2.2" height="2.8" fill="rgb(85, 0, 0)"/><rect x="123.9" y="149.9" width="2.2" height="2.8" fill="rgb(66, 0, 0)"/><rect x="125.8" y="149.9" width="2.2" height="2.8" fill="rgb(56, 0, 0)"/><rect x="127.7" y="149.9" width="2.2" height="2.8" fill="rgb(33, 0, 0)"/><rect x="129.6" y="149.9" width="2.2" height="2.8" fill="rgb(22, 0, 0)"/><rect x="131.5" y="149.9" width="2.2" height="2.8" fill="rgb(15, 0, 0)"/><rect x="133.4" y="149.9" width="2.2" height="2.8" fill="rgb(8, 0, 0)"/><rect x="209.7" y="149.9" width="2.2" height="2.8" fill="rgb(12, 0, 0)"/><rect x="47.7" y="152.4" width="2.2" height="2.8" fill="rgb(10, 0, 0)"/><rect x="97.2" y="152.4" width="2.2" height="2.8" fill="rgb(11, 0, 0)"/><rect x="99.1" y="152.4" width="2.2" height="2.8" fill="rgb(23, 0, 0)"/><rect x="101.0" y="152.4" width="2.2" height="2.8" fill="rgb(31, 0, 0)"/><rect x="102.9" y="152.4" width="2.2" height="2.8" fill="rgb(60, 0, 0)"/><rect x="104.8" y="152.4" width="2.2" height="2.8" fill="rgb(84, 0, 0)"/><rect x="106.8" y="152.4" width="2.2" height="2.8" fill="rgb(105, 0, 0)"/><rect x="108.7" y="152.4" width="2.2" height="2.8" fill="rgb(148, 0, 0)"/><rect x="110.6" y="152.4" width="2.2" height="2.8" fill="rgb(99, 0, 0)"/><rect x="112.5" y="152.4" width="2.2" height="2.8" fill="rgb(147, 0, 0)"/><rect x="114.4" y="152.4" width="2.2" height="2.8" fill="rgb(172, 0, 0)"/><rect x="116.3" y="152.4" width="2.2" height="2.8" fill="rgb(178, 0, 0)"/><rect x="118.2" y="152.4" width="2.2" height="2.8" fill="rgb(179, 0, 0)"/><rect x="120.1" y="152.4" width="2.2" height="2.8" fill="rgb(147, 0, 0)"/><rect x="122.0" y="152.4" width="2.2" height="2.8" fill="rgb(137, 0, 0)"/><rect x="123.9" y="152.4" width="2.2" height="2.8" fill="rgb(115, 0, 0)"/><rect x="125.8" y="152.4" width="2.2" height="2.8" fill="rgb(90, 0, 0)"/><rect x="127.7" y="152.4" width="2.2" height="2.8" fill="rgb(65, 0, 0)"/><rect x="129.6" y="152.4" width="2.2" height="2.8" fill="rgb(65, 0, 0)"/><rect x="131.5" y="152.4" width="2.2" height="2.8" fill="rgb(26, 0, 0)"/><rect x="133.4" y="152.4" width="2.2" height="2.8" fill="rgb(18, 0, 0)"/><rect x="135.3" y="152.4" width="2.2" height="2.8" fill="rgb(8, 0, 0)"/><rect x="226.8" y="152.4" width="2.2" height="2.8" fill="rgb(11, 0, 0)"/><rect x="95.3" y="154.9" width="2.2" height="2.8" fill="rgb(12, 0, 0)"/><rect x="97.2" y="154.9" width="2.2" height="2.8" fill="rgb(23, 0, 0)"/><rect x="99.1" y="154.9" width="2.2" height="2.8" fill="rgb(40, 0, 0)"/><rect x="101.0" y="154.9" width="2.2" height="2.8" fill="rgb(60, 0, 0)"/><rect x="102.9" y="154.9" width="2.2" height="2.8" fill="rgb(39, 0, 0)"/><rect x="104.8" y="154.9" width="2.2" height="2.8" fill="rgb(145, 0, 0)"/><rect x="106.8" y="154.9" width="2.2" height="2.8" fill="rgb(202, 0, 0)"/><rect x="108.7" y="154.9" width="2.2" height="2.8" fill="rgb(230, 0, 0)"/><rect x="110.6" y="154.9" width="2.2" height="2.8" fill="rgb(161, 0, 0)"/><rect x="112.5" y="154.9" width="2.2" height="2.8" fill="rgb(181, 0, 0)"/><rect x="114.4" y="154.9" width="2.2" height="2.8" fill="rgb(248, 0, 0)"/><rect x="116.3" y="154.9" width="2.2" height="2.8" fill="rgb(178, 0, 0)"/><rect x="118.2" y="154.9" width="2.2" height="2.8" fill="rgb(194, 0, 0)"/><rect x="120.1" y="154.9" width="2.2" height="2.8" fill="rgb(215, 0, 0)"/><rect x="122.0" y="154.9" width="2.2" height="2.8" fill="rgb(186, 0, 0)"/><rect x="123.9" y="154.9" width="2.2" height="2.8" fill="rgb(183, 0, 0)"/><rect x="125.8" y="154.9" width="2.2" height="2.8" fill="rgb(129, 0, 0)"/><rect x="127.7" y="154.9" width="2.2" height="2.8" fill="rgb(109, 0, 0)"/><rect x="129.6" y="154.9" width="2.2" height="2.8" fill="rgb(82, 0, 0)"/><rect x="131.5" y="154.9" width="2.2" height="2.8" fill="rgb(65, 0, 0)"/><rect x="133.4" y="154.9" width="2.2" height="2.8" fill="rgb(29, 0, 0)"/><rect x="135.3" y="154.9" width="2.2" height="2.8" fill="rgb(17, 0, 0)"/><rect x="137.2" y="154.9" width="2.2" height="2.8" fill="rgb(9, 0, 0)"/><rect x="146.8" y="154.9" width="2.2" height="2.8" fill="rgb(16, 0, 0)"/><rect x="234.5" y="154.9" width="2.2" height="2.8" fill="rgb(9, 0, 0)"/><rect x="74.3" y="157.5" width="2.2" height="2.8" fill="rgb(15, 0, 0)"/><rect x="93.4" y="157.5" width="2.2" height="2.8" fill="rgb(10, 0, 0)"/><rect x="95.3" y="157.5" width="2.2" height="2.8" fill="rgb(17, 0, 0)"/><rect x="97.2" y="157.5" width="2.2" height="2.8" fill="rgb(37, 0, 0)"/><rect x="99.1" y="157.5" width="2.2" height="2.8" fill="rgb(66, 0, 0)"/><rect x="101.0" y="157.5" width="2.2" height="2.8" fill="rgb(92, 0, 0)"/><rect x="102.9" y="157.5" width="2.2" height="2.8" fill="rgb(117, 0, 0)"/><rect x="104.8" y="157.5" width="2.2" height="2.8" fill="rgb(138, 0, 0)"/><rect x="106.8" y="157.5" width="2.2" height="2.8" fill="rgb(250, 0, 0)"/><rect x="108.7" y="157.5" width="2.2" height="2.8" fill="rgb(240, 0, 0)"/><rect x="110.6" y="157.5" width="2.2" height="2.8" fill="rgb(234, 0, 0)"/><rect x="112.5" y="157.5" width="2.2" height="2.8" fill="rgb(255, 11, 0)"/><rect x="114.4" y="157.5" width="2.2" height="2.8" fill="rgb(159, 0, 0)"/><rect x="116.3" y="157.5" width="2.2" height="2.8" fill="rgb(228, 0, 0)"/><rect x="118.2" y="157.5" width="2.2" height="2.8" fill="rgb(234, 0, 0)"/><rect x="120.1" y="157.5" width="2.2" height="2.8" fill="rgb(182, 0, 0)"/><rect x="122.0" y="157.5" width="2.2" height="2.8" fill="rgb(204, 0, 0)"/><rect x="123.9" y="157.5" width="2.2" height="2.8" fill="rgb(200, 0, 0)"/><rect x="125.8" y="157.5" width="2.2" height="2.8" fill="rgb(172, 0, 0)"/><rect x="127.7" y="157.5" width="2.2" height="2.8" fill="rgb(177, 0, 0)"/><rect x="129.6" y="157.5" width="2.2" height="2.8" fill="rgb(117, 0, 0)"/><rect x="131.5" y="157.5" width="2.2" height="2.8" fill="rgb(100, 0, 0)"/><rect x="133.4" y="157.5" width="2.2" height="2.8" fill="rgb(63, 0, 0)"/><rect x="135.3" y="157.5" width="2.2" height="2.8" fill="rgb(24, 0, 0)"/><rect x="137.2" y="157.5" width="2.2" height="2.8" fill="rgb(12, 0, 0)"/><rect x="270.7" y="157.5" width="2.2" height="2.8" fill="rgb(17, 0, 0)"/><rect x="80.1" y="160.0" width="2.2" height="2.8" fill="rgb(14, 0, 0)"/><rect x="93.4" y="160.0" width="2.2" height="2.8" fill="rgb(10, 0, 0)"/><rect x="95.3" y="160.0" width="2.2" height="2.8" fill="rgb(23, 0, 0)"/><rect x="97.2" y="160.0" width="2.2" height="2.8" fill="rgb(52, 0, 0)"/><rect x="99.1" y="160.0" width="2.2" height="2.8" fill="rgb(87, 0, 0)"/><rect x="101.0" y="160.0" width="2.2" height="2.8" fill="rgb(151, 0, 0)"/><rect x="102.9" y="160.0" width="2.2" height="2.8" fill="rgb(177, 0, 0)"/><rect x="104.8" y="160.0" width="2.2" height="2.8" fill="rgb(217, 0, 0)"/><rect x="106.8" y="160.0" width="2.2" height="2.8" fill="rgb(205, 0, 0)"/><rect x="108.7" y="160.0" width="2.2" height="2.8" fill="rgb(180, 0, 0)"/><rect x="110.6" y="160.0" width="2.2" height="2.8" fill="rgb(249, 0, 0)"/><rect x="112.5" y="160.0" width="2.2" height="2.8" fill="rgb(206, 0, 0)"/><rect x="114.4" y="160.0" width="2.2" height="2.8" fill="rgb(225, 0, 0)"/><rect x="116.3" y="160.0" width="2.2" height="2.8" fill="rgb(255, 19, 0)"/><rect x="118.2" y="160.0" width="2.2" height="2.8" fill="rgb(201, 0, 0)"/><rect x="120.1" y="160.0" width="2.2" height="2.8" fill="rgb(241, 0, 0)"/><rect x="122.0" y="160.0" width="2.2" height="2.8" fill="rgb(191, 0, 0)"/><rect x="123.9" y="160.0" width="2.2" height="2.8" fill="rgb(248, 0, 0)"/><rect x="125.8" y="160.0" width="2.2" height="2.8" fill="rgb(196, 0, 0)"/><rect x="127.7" y="160.0" width="2.2" height="2.8" fill="rgb(164, 0, 0)"/><rect x="129.6" y="160.0" width="2.2" height="2.8" fill="rgb(162, 0, 0)"/><rect x="131.5" y="160.0" width="2.2" height="2.8" fill="rgb(112, 0, 0)"/><rect x="133.4" y="160.0" width="2.2" height="2.8" fill="rgb(96, 0, 0)"/><rect x="135.3" y="160.0" width="2.2" height="2.8" fill="rgb(45, 0, 0)"/><rect x="137.2" y="160.0" width="2.2" height="2.8" fill="rgb(23, 0, 0)"/><rect x="139.2" y="160.0" width="2.2" height="2.8" fill="rgb(10, 0, 0)"/><rect x="160.1" y="160.0" width="2.2" height="2.8" fill="rgb(16, 0, 0)"/><rect x="188.7" y="160.0" width="2.2" height="2.8" fill="rgb(15, 0, 0)"/><rect x="62.9" y="162.6" width="2.2" height="2.8" fill="rgb(10, 0, 0)"/><rect x="91.5" y="162.6" width="2.2" height="2.8" fill="rgb(8, 0, 0)"/><rect x="93.4" y="162.6" width="2.2" height="2.8" fill="rgb(19, 0, 0)"/><rect x="95.3" y="162.6" width="2.2" height="2.8" fill="rgb(43, 0, 0)"/><rect x="97.2" y="162.6" width="2.2" height="2.8" fill="rgb(67, 0, 0)"/><rect x="99.1" y="162.6" width="2.2" height="2.8" fill="rgb(104, 0, 0)"/><rect x="101.0" y="162.6" width="2.2" height="2.8" fill="rgb(156, 0, 0)"/><rect x="102.9" y="162.6" width="2.2" height="2.8" fill="rgb(173, 0, 0)"/><rect x="104.8" y="162.6" width="2.2" height="2.8" fill="rgb(255, 3, 0)"/><rect x="106.8" y="162.6" width="2.2" height="2.8" fill="rgb(223, 0, 0)"/><rect x="108.7" y="162.6" width="2.2" height="2.8" fill="rgb(222, 0, 0)"/><rect x="110.6" y="162.6" width="2.2" height="2.8" fill="rgb(255, 19, 0)"/><rect x="112.5" y="162.6" width="2.2" height="2.8" fill="rgb(200, 0, 0)"/><rect x="114.4" y="162.6" width="2.2" height="2.8" fill="rgb(169, 0, 0)"/><rect x="116.3" y="162.6" width="2.2" height="2.8" fill="rgb(255, 5, 0)"/><rect x="118.2" y="162.6" width="2.2" height="2.8" fill="rgb(223, 0, 0)"/><rect x="120.1" y="162.6" width="2.2" height="2.8" fill="rgb(255, 2, 0)"/><rect x="122.0" y="162.6" width="2.2" height="2.8" fill="rgb(255, 4, 0)"/><rect x="123.9" y="162.6" width="2.2" height="2.8" fill="rgb(211, 0, 0)"/><rect x="125.8" y="162.6" width="2.2" height="2.8" fill="rgb(246, 0, 0)"/><rect x="127.7" y="162.6" width="2.2" height="2.8" fill="rgb(161, 0, 0)"/><rect x="129.6" y="162.6" width="2.2" height="2.8" fill="rgb(151, 0, 0)"/><rect x="131.5" y="162.6" width="2.2" height="2.8" fill="rgb(142, 0, 0)"/><rect x="133.4" y="162.6" width="2.2" height="2.8" fill="rgb(29, 0, 0)"/><rect x="135.3" y="162.6" width="2.2" height="2.8" fill="rgb(64, 0, 0)"/><rect x="137.2" y="162.6" width="2.2" height="2.8" fill="rgb(29, 0, 0)"/><rect x="139.2" y="162.6" width="2.2" height="2.8" fill="rgb(12, 0, 0)"/><rect x="152.5" y="162.6" width="2.2" height="2.8" fill="rgb(11, 0, 0)"/><rect x="238.3" y="162.6" width="2.2" height="2.8" fill="rgb(18, 0, 0)"/><rect x="257.3" y="162.6" width="2.2" height="2.8" fill="rgb(8, 0, 0)"/><rect x="85.8" y="165.1" width="2.2" height="2.8" fill="rgb(15, 0, 0)"/><rect x="91.5" y="165.1" width="2.2" height="2.8" fill="rgb(9, 0, 0)"/><rect x="93.4" y="165.1" width="2.2" height="2.8" fill="rgb(22, 0, 0)"/><rect x="95.3" y="165.1" width="2.2" height="2.8" fill="rgb(52, 0, 0)"/><rect x="97.2" y="165.1" width="2.2" height="2.8" fill="rgb(87, 0, 0)"/><rect x="99.1" y="165.1" width="2.2" height="2.8" fill="rgb(156, 0, 0)"/><rect x="101.0" y="165.1" width="2.2" height="2.8" fill="rgb(186, 0, 0)"/><rect x="102.9" y="165.1" width="2.2" height="2.8" fill="rgb(162, 0, 0)"/><rect x="104.8" y="165.1" width="2.2" height="2.8" fill="rgb(240, 0, 0)"/><rect x="106.8" y="165.1" width="2.2" height="2.8" fill="rgb(216, 0, 0)"/><rect x="108.7" y="165.1" width="2.2" height="2.8" fill="rgb(233, 0, 0)"/><rect x="110.6" y="165.1" width="2.2" height="2.8" fill="rgb(241, 0, 0)"/><rect x="112.5" y="165.1" width="2.2" height="2.8" fill="rgb(255, 14, 0)"/><rect x="114.4" y="165.1" width="2.2" height="2.8" fill="rgb(220, 0, 0)"/><rect x="116.3" y="165.1" width="2.2" height="2.8" fill="rgb(237, 0, 0)"/><rect x="118.2" y="165.1" width="2.2" height="2.8" fill="rgb(239, 0, 0)"/><rect x="120.1" y="165.1" width="2.2" height="2.8" fill="rgb(231, 0, 0)"/><rect x="122.0" y="165.1" width="2.2" height="2.8" fill="rgb(184, 0, 0)"/><rect x="123.9" y="165.1" width="2.2" height="2.8" fill="rgb(228, 0, 0)"/><rect x="125.8" y="165.1" width="2.2" height="2.8" fill="rgb(231, 0, 0)"/><rect x="127.7" y="165.1" width="2.2" height="2.8" fill="rgb(193, 0, 0)"/><rect x="129.6" y="165.1" width="2.2" height="2.8" fill="rgb(169, 0, 0)"/><rect x="131.5" y="165.1" width="2.2" height="2.8" fill="rgb(167, 0, 0)"/><rect x="133.4" y="165.1" width="2.2" height="2.8" fill="rgb(114, 0, 0)"/><rect x="135.3" y="165.1" width="2.2" height="2.8" fill="rgb(64, 0, 0)"/><rect x="137.2" y="165.1" width="2.2" height="2.8" fill="rgb(34, 0, 0)"/><rect x="139.2" y="165.1" width="2.2" height="2.8" fill="rgb(18, 0, 0)"/><rect x="141.1" y="165.1" width="2.2" height="2.8" fill="rgb(8, 0, 0)"/><rect x="259.2" y="165.1" width="2.2" height="2.8" fill="rgb(16, 0, 0)"/><rect x="13.3" y="167.6" width="2.2" height="2.8" fill="rgb(10, 0, 0)"/><rect x="66.7" y="167.6" width="2.2" height="2.8" fill="rgb(18, 0, 0)"/><rect x="91.5" y="167.6" width="2.2" height="2.8" fill="rgb(9, 0, 0)"/><rect x="93.4" y="167.6" width="2.2" height="2.8" fill="rgb(29, 0, 0)"/><rect x="95.3" y="167.6" width="2.2" height="2.8" fill="rgb(50, 0, 0)"/><rect x="97.2" y="167.6" width="2.2" height="2.8" fill="rgb(71, 0, 0)"/><rect x="99.1" y="167.6" width="2.2" height="2.8" fill="rgb(143, 0, 0)"/><rect x="101.0" y="167.6" width="2.2" height="2.8" fill="rgb(179, 0, 0)"/><rect x="102.9" y="167.6" width="2.2" height="2.8" fill="rgb(203, 0, 0)"/><rect x="104.8" y="167.6" width="2.2" height="2.8" fill="rgb(243, 0, 0)"/><rect x="106.8" y="167.6" width="2.2" height="2.8" fill="rgb(255, 6, 0)"/><rect x="108.7" y="167.6" width="2.2" height="2.8" fill="rgb(255, 18, 0)"/><rect x="110.6" y="167.6" width="2.2" height="2.8" fill="rgb(223, 0, 0)"/><rect x="112.5" y="167.6" width="2.2" height="2.8" fill="rgb(255, 6, 0)"/><rect x="114.4" y="167.6" width="2.2" height="2.8" fill="rgb(197, 0, 0)"/><rect x="116.3" y="167.6" width="2.2" height="2.8" fill="rgb(204, 0, 0)"/><rect x="118.2" y="167.6" width="2.2" height="2.8" fill="rgb(255, 4, 0)"/><rect x="120.1" y="167.6" width="2.2" height="2.8" fill="rgb(255, 23, 0)"/><rect x="122.0" y="167.6" width="2.2" height="2.8" fill="rgb(233, 0, 0)"/><rect x="123.9" y="167.6" width="2.2" height="2.8" fill="rgb(255, 9, 0)"/><rect x="125.8" y="167.6" width="2.2" height="2.8" fill="rgb(255, 50, 0)"/><rect x="127.7" y="167.6" width="2.2" height="2.8" fill="rgb(214, 0, 0)"/><rect x="129.6" y="167.6" width="2.2" height="2.8" fill="rgb(212, 0, 0)"/><rect x="131.5" y="167.6" width="2.2" height="2.8" fill="rgb(176, 0, 0)"/><rect x="133.4" y="167.6" width="2.2" height="2.8" fill="rgb(113, 0, 0)"/><rect x="135.3" y="167.6" width="2.2" height="2.8" fill="rgb(80, 0, 0)"/><rect x="137.2" y="167.6" width="2.2" height="2.8" fill="rgb(45, 0, 0)"/><rect x="139.2" y="167.6" width="2.2" height="2.8" fill="rgb(18, 0, 0)"/><rect x="219.2" y="167.6" width="2.2" height="2.8" fill="rgb(16, 0, 0)"/><rect x="276.4" y="167.6" width="2.2" height="2.8" fill="rgb(16, 0, 0)"/><rect x="70.5" y="170.2" width="2.2" height="2.8" fill="rgb(18, 0, 0)"/><rect x="91.5" y="170.2" width="2.2" height="2.8" fill="rgb(12, 0, 0)"/><rect x="93.4" y="170.2" width="2.2" height="2.8" fill="rgb(27, 0, 0)"/><rect x="95.3" y="170.2" width="2.2" height="2.8" fill="rgb(47, 0, 0)"/><rect x="97.2" y="170.2" width="2.2" height="2.8" fill="rgb(90, 0, 0)"/><rect x="99.1" y="170.2" width="2.2" height="2.8" fill="rgb(139, 0, 0)"/><rect x="101.0" y="170.2" width="2.2" height="2.8" fill="rgb(196, 0, 0)"/><rect x="102.9" y="170.2" width="2.2" height="2.8" fill="rgb(201, 0, 0)"/><rect x="104.8" y="170.2" width="2.2" height="2.8" fill="rgb(255, 1, 0)"/><rect x="106.8" y="170.2" width="2.2" height="2.8" fill="rgb(229, 0, 0)"/><rect x="108.7" y="170.2" width="2.2" height="2.8" fill="rgb(245, 0, 0)"/><rect x="110.6" y="170.2" width="2.2" height="2.8" fill="rgb(213, 0, 0)"/><rect x="112.5" y="170.2" width="2.2" height="2.8" fill="rgb(238, 0, 0)"/><rect x="114.4" y="170.2" width="2.2" height="2.8" fill="rgb(255, 6, 0)"/><rect x="116.3" y="170.2" width="2.2" height="2.8" fill="rgb(220, 0, 0)"/><rect x="118.2" y="170.2" width="2.2" height="2.8" fill="rgb(199, 0, 0)"/><rect x="120.1" y="170.2" width="2.2" height="2.8" fill="rgb(227, 0, 0)"/><rect x="122.0" y="170.2" width="2.2" height="2.8" fill="rgb(255, 28, 0)"/><rect x="123.9" y="170.2" width="2.2" height="2.8" fill="rgb(231, 0, 0)"/><rect x="125.8" y="170.2" width="2.2" height="2.8" fill="rgb(255, 7, 0)"/><rect x="127.7" y="170.2" width="2.2" height="2.8" fill="rgb(203, 0, 0)"/><rect x="129.6" y="170.2" width="2.2" height="2.8" fill="rgb(246, 0, 0)"/><rect x="131.5" y="170.2" width="2.2" height="2.8" fill="rgb(168, 0, 0)"/><rect x="133.4" y="170.2" width="2.2" height="2.8" fill="rgb(128, 0, 0)"/><rect x="135.3" y="170.2" width="2.2" height="2.8" fill="rgb(72, 0, 0)"/><rect x="137.2" y="170.2" width="2.2" height="2.8" fill="rgb(46, 0, 0)"/><rect x="139.2" y="170.2" width="2.2" height="2.8" fill="rgb(26, 0, 0)"/><rect x="141.1" y="170.2" width="2.2" height="2.8" fill="rgb(9, 0, 0)"/><rect x="146.8" y="170.2" width="2.2" height="2.8" fill="rgb(9, 0, 0)"/><rect x="190.6" y="170.2" width="2.2" height="2.8" fill="rgb(15, 0, 0)"/><rect x="261.2" y="170.2" width="2.2" height="2.8" fill="rgb(19, 0, 0)"/><rect x="91.5" y="172.7" width="2.2" height="2.8" fill="rgb(10, 0, 0)"/><rect x="93.4" y="172.7" width="2.2" height="2.8" fill="rgb(26, 0, 0)"/><rect x="95.3" y="172.7" width="2.2" height="2.8" fill="rgb(46, 0, 0)"/><rect x="97.2" y="172.7" width="2.2" height="2.8" fill="rgb(83, 0, 0)"/><rect x="99.1" y="172.7" width="2.2" height="2.8" fill="rgb(134, 0, 0)"/><rect x="101.0" y="172.7" width="2.2" height="2.8" fill="rgb(175, 0, 0)"/><rect x="102.9" y="172.7" width="2.2" height="2.8" fill="rgb(193, 0, 0)"/><rect x="104.8" y="172.7" width="2.2" height="2.8" fill="rgb(198, 0, 0)"/><rect x="106.8" y="172.7" width="2.2" height="2.8" fill="rgb(255, 50, 0)"/><rect x="108.7" y="172.7" width="2.2" height="2.8" fill="rgb(255, 15, 0)"/><rect x="110.6" y="172.7" width="2.2" height="2.8" fill="rgb(226, 0, 0)"/><rect x="112.5" y="172.7" width="2.2" height="2.8" fill="rgb(251, 0, 0)"/><rect x="114.4" y="172.7" width="2.2" height="2.8" fill="rgb(249, 0, 0)"/><rect x="116.3" y="172.7" width="2.2" height="2.8" fill="rgb(255, 2, 0)"/><rect x="118.2" y="172.7" width="2.2" height="2.8" fill="rgb(255, 12, 0)"/><rect x="120.1" y="172.7" width="2.2" height="2.8" fill="rgb(255, 18, 0)"/><rect x="122.0" y="172.7" width="2.2" height="2.8" fill="rgb(226, 0, 0)"/><rect x="123.9" y="172.7" width="2.2" height="2.8" fill="rgb(202, 0, 0)"/><rect x="125.8" y="172.7" width="2.2" height="2.8" fill="rgb(255, 9, 0)"/><rect x="127.7" y="172.7" width="2.2" height="2.8" fill="rgb(212, 0, 0)"/><rect x="129.6" y="172.7" width="2.2" height="2.8" fill="rgb(176, 0, 0)"/><rect x="131.5" y="172.7" width="2.2" height="2.8" fill="rgb(213, 0, 0)"/><rect x="133.4" y="172.7" width="2.2" height="2.8" fill="rgb(104, 0, 0)"/><rect x="135.3" y="172.7" width="2.2" height="2.8" fill="rgb(84, 0, 0)"/><rect x="137.2" y="172.7" width="2.2" height="2.8" fill="rgb(42, 0, 0)"/><rect x="139.2" y="172.7" width="2.2" height="2.8" fill="rgb(19, 0, 0)"/><rect x="247.8" y="172.7" width="2.2" height="2.8" fill="rgb(18, 0, 0)"/><rect x="266.9" y="172.7" width="2.2" height="2.8" fill="rgb(10, 0, 0)"/><rect x="11.4" y="175.3" width="2.2" height="2.8" fill="rgb(15, 0, 0)"/><rect x="24.8" y="175.3" width="2.2" height="2.8" fill="rgb(20, 0, 0)"/><rect x="49.6" y="175.3" width="2.2" height="2.8" fill="rgb(18, 0, 0)"/><rect x="93.4" y="175.3" width="2.2" height="2.8" fill="rgb(17, 0, 0)"/><rect x="95.3" y="175.3" width="2.2" height="2.8" fill="rgb(39, 0, 0)"/><rect x="97.2" y="175.3" width="2.2" height="2.8" fill="rgb(62, 0, 0)"/><rect x="99.1" y="175.3" width="2.2" height="2.8" fill="rgb(111, 0, 0)"/><rect x="101.0" y="175.3" width="2.2" height="2.8" fill="rgb(157, 0, 0)"/><rect x="102.9" y="175.3" width="2.2" height="2.8" fill="rgb(123, 0, 0)"/><rect x="104.8" y="175.3" width="2.2" height="2.8" fill="rgb(161, 0, 0)"/><rect x="106.8" y="175.3" width="2.2" height="2.8" fill="rgb(192, 0, 0)"/><rect x="108.7" y="175.3" width="2.2" height="2.8" fill="rgb(243, 0, 0)"/><rect x="110.6" y="175.3" width="2.2" height="2.8" fill="rgb(246, 0, 0)"/><rect x="112.5" y="175.3" width="2.2" height="2.8" fill="rgb(223, 0, 0)"/><rect x="114.4" y="175.3" width="2.2" height="2.8" fill="rgb(252, 0, 0)"/><rect x="116.3" y="175.3" width="2.2" height="2.8" fill="rgb(223, 0, 0)"/><rect x="118.2" y="175.3" width="2.2" height="2.8" fill="rgb(216, 0, 0)"/><rect x="120.1" y="175.3" width="2.2" height="2.8" fill="rgb(187, 0, 0)"/><rect x="122.0" y="175.3" width="2.2" height="2.8" fill="rgb(255, 0, 0)"/><rect x="123.9" y="175.3" width="2.2" height="2.8" fill="rgb(247, 0, 0)"/><rect x="125.8" y="175.3" width="2.2" height="2.8" fill="rgb(178, 0, 0)"/><rect x="127.7" y="175.3" width="2.2" height="2.8" fill="rgb(171, 0, 0)"/><rect x="129.6" y="175.3" width="2.2" height="2.8" fill="rgb(165, 0, 0)"/><rect x="131.5" y="175.3" width="2.2" height="2.8" fill="rgb(113, 0, 0)"/><rect x="133.4" y="175.3" width="2.2" height="2.8" fill="rgb(100, 0, 0)"/><rect x="135.3" y="175.3" width="2.2" height="2.8" fill="rgb(63, 0, 0)"/><rect x="137.2" y="175.3" width="2.2" height="2.8" fill="rgb(24, 0, 0)"/><rect x="139.2" y="175.3" width="2.2" height="2.8" fill="rgb(15, 0, 0)"/><rect x="173.5" y="175.3" width="2.2" height="2.8" fill="rgb(13, 0, 0)"/><rect x="251.6" y="175.3" width="2.2" height="2.8" fill="rgb(10, 0, 0)"/><rect x="3.8" y="177.8" width="2.2" height="2.8" fill="rgb(11, 0, 0)"/><rect x="93.4" y="177.8" width="2.2" height="2.8" fill="rgb(13, 0, 0)"/><rect x="95.3" y="177.8" width="2.2" height="2.8" fill="rgb(24, 0, 0)"/><rect x="97.2" y="177.8" width="2.2" height="2.8" fill="rgb(47, 0, 0)"/><rect x="99.1" y="177.8" width="2.2" height="2.8" fill="rgb(109, 0, 0)"/><rect x="101.0" y="177.8" width="2.2" height="2.8" fill="rgb(118, 0, 0)"/><rect x="102.9" y="177.8" width="2.2" height="2.8" fill="rgb(152, 0, 0)"/><rect x="104.8" y="177.8" width="2.2" height="2.8" fill="rgb(186, 0, 0)"/><rect x="106.8" y="177.8" width="2.2" height="2.8" fill="rgb(255, 2, 0)"/><rect x="108.7" y="177.8" width="2.2" height="2.8" fill="rgb(221, 0, 0)"/><rect x="110.6" y="177.8" width="2.2" height="2.8" fill="rgb(255, 5, 0)"/><rect x="112.5" y="177.8" width="2.2" height="2.8" fill="rgb(244, 0, 0)"/><rect x="114.4" y="177.8" width="2.2" height="2.8" fill="rgb(242, 0, 0)"/><rect x="116.3" y="177.8" width="2.2" height="2.8" fill="rgb(255, 2, 0)"/><rect x="118.2" y="177.8" width="2.2" height="2.8" fill="rgb(218, 0, 0)"/><rect x="120.1" y="177.8" width="2.2" height="2.8" fill="rgb(255, 11, 0)"/><rect x="122.0" y="177.8" width="2.2" height="2.8" fill="rgb(206, 0, 0)"/><rect x="123.9" y="177.8" width="2.2" height="2.8" fill="rgb(255, 22, 0)"/><rect x="125.8" y="177.8" width="2.2" height="2.8" fill="rgb(205, 0, 0)"/><rect x="127.7" y="177.8" width="2.2" height="2.8" fill="rgb(212, 0, 0)"/><rect x="129.6" y="177.8" width="2.2" height="2.8" fill="rgb(184, 0, 0)"/><rect x="131.5" y="177.8" width="2.2" height="2.8" fill="rgb(70, 0, 0)"/><rect x="133.4" y="177.8" width="2.2" height="2.8" fill="rgb(92, 0, 0)"/><rect x="135.3" y="177.8" width="2.2" height="2.8" fill="rgb(43, 0, 0)"/><rect x="137.2" y="177.8" width="2.2" height="2.8" fill="rgb(24, 0, 0)"/><rect x="139.2" y="177.8" width="2.2" height="2.8" fill="rgb(10, 0, 0)"/><rect x="78.2" y="180.3" width="2.2" height="2.8" fill="rgb(15, 0, 0)"/><rect x="93.4" y="180.3" width="2.2" height="2.8" fill="rgb(8, 0, 0)"/><rect x="95.3" y="180.3" width="2.2" height="2.8" fill="rgb(15, 0, 0)"/><rect x="97.2" y="180.3" width="2.2" height="2.8" fill="rgb(33, 0, 0)"/><rect x="99.1" y="180.3" width="2.2" height="2.8" fill="rgb(63, 0, 0)"/><rect x="101.0" y="180.3" width="2.2" height="2.8" fill="rgb(105, 0, 0)"/><rect x="102.9" y="180.3" width="2.2" height="2.8" fill="rgb(141, 0, 0)"/><rect x="104.8" y="180.3" width="2.2" height="2.8" fill="rgb(185, 0, 0)"/><rect x="106.8" y="180.3" width="2.2" height="2.8" fill="rgb(191, 0, 0)"/><rect x="108.7" y="180.3" width="2.2" height="2.8" fill="rgb(245, 0, 0)"/><rect x="110.6" y="180.3" width="2.2" height="2.8" fill="rgb(204, 0, 0)"/><rect x="112.5" y="180.3" width="2.2" height="2.8" fill="rgb(211, 0, 0)"/><rect x="114.4" y="180.3" width="2.2" height="2.8" fill="rgb(189, 0, 0)"/><rect x="116.3" y="180.3" width="2.2" height="2.8" fill="rgb(168, 0, 0)"/><rect x="118.2" y="180.3" width="2.2" height="2.8" fill="rgb(215, 0, 0)"/><rect x="120.1" y="180.3" width="2.2" height="2.8" fill="rgb(233, 0, 0)"/><rect x="122.0" y="180.3" width="2.2" height="2.8" fill="rgb(220, 0, 0)"/><rect x="123.9" y="180.3" width="2.2" height="2.8" fill="rgb(222, 0, 0)"/><rect x="125.8" y="180.3" width="2.2" height="2.8" fill="rgb(113, 0, 0)"/><rect x="127.7" y="180.3" width="2.2" height="2.8" fill="rgb(202, 0, 0)"/><rect x="129.6" y="180.3" width="2.2" height="2.8" fill="rgb(76, 0, 0)"/><rect x="131.5" y="180.3" width="2.2" height="2.8" fill="rgb(114, 0, 0)"/><rect x="133.4" y="180.3" width="2.2" height="2.8" fill="rgb(58, 0, 0)"/><rect x="135.3" y="180.3" width="2.2" height="2.8" fill="rgb(34, 0, 0)"/><rect x="137.2" y="180.3" width="2.2" height="2.8" fill="rgb(10, 0, 0)"/><rect x="95.3" y="182.9" width="2.2" height="2.8" fill="rgb(13, 0, 0)"/><rect x="97.2" y="182.9" width="2.2" height="2.8" fill="rgb(20, 0, 0)"/><rect x="99.1" y="182.9" width="2.2" height="2.8" fill="rgb(42, 0, 0)"/><rect x="101.0" y="182.9" width="2.2" height="2.8" fill="rgb(50, 0, 0)"/><rect x="102.9" y="182.9" width="2.2" height="2.8" fill="rgb(66, 0, 0)"/><rect x="104.8" y="182.9" width="2.2" height="2.8" fill="rgb(137, 0, 0)"/><rect x="106.8" y="182.9" width="2.2" height="2.8" fill="rgb(168, 0, 0)"/><rect x="108.7" y="182.9" width="2.2" height="2.8" fill="rgb(153, 0, 0)"/><rect x="110.6" y="182.9" width="2.2" height="2.8" fill="rgb(219, 0, 0)"/><rect x="112.5" y="182.9" width="2.2" height="2.8" fill="rgb(234, 0, 0)"/><rect x="114.4" y="182.9" width="2.2" height="2.8" fill="rgb(196, 0, 0)"/><rect x="116.3" y="182.9" width="2.2" height="2.8" fill="rgb(203, 0, 0)"/><rect x="118.2" y="182.9" width="2.2" height="2.8" fill="rgb(153, 0, 0)"/><rect x="120.1" y="182.9" width="2.2" height="2.8" fill="rgb(170, 0, 0)"/><rect x="122.0" y="182.9" width="2.2" height="2.8" fill="rgb(229, 0, 0)"/><rect x="123.9" y="182.9" width="2.2" height="2.8" fill="rgb(116, 0, 0)"/><rect x="125.8" y="182.9" width="2.2" height="2.8" fill="rgb(165, 0, 0)"/><rect x="127.7" y="182.9" width="2.2" height="2.8" fill="rgb(125, 0, 0)"/><rect x="129.6" y="182.9" width="2.2" height="2.8" fill="rgb(109, 0, 0)"/><rect x="131.5" y="182.9" width="2.2" height="2.8" fill="rgb(59, 0, 0)"/><rect x="133.4" y="182.9" width="2.2" height="2.8" fill="rgb(33, 0, 0)"/><rect x="135.3" y="182.9" width="2.2" height="2.8" fill="rgb(17, 0, 0)"/><rect x="137.2" y="182.9" width="2.2" height="2.8" fill="rgb(8, 0, 0)"/><rect x="97.2" y="185.4" width="2.2" height="2.8" fill="rgb(12, 0, 0)"/><rect x="99.1" y="185.4" width="2.2" height="2.8" fill="rgb(21, 0, 0)"/><rect x="101.0" y="185.4" width="2.2" height="2.8" fill="rgb(37, 0, 0)"/><rect x="102.9" y="185.4" width="2.2" height="2.8" fill="rgb(53, 0, 0)"/><rect x="104.8" y="185.4" width="2.2" height="2.8" fill="rgb(84, 0, 0)"/><rect x="106.8" y="185.4" width="2.2" height="2.8" fill="rgb(101, 0, 0)"/><rect x="108.7" y="185.4" width="2.2" height="2.8" fill="rgb(123, 0, 0)"/><rect x="110.6" y="185.4" width="2.2" height="2.8" fill="rgb(141, 0, 0)"/><rect x="112.5" y="185.4" width="2.2" height="2.8" fill="rgb(198, 0, 0)"/><rect x="114.4" y="185.4" width="2.2" height="2.8" fill="rgb(149, 0, 0)"/><rect x="116.3" y="185.4" width="2.2" height="2.8" fill="rgb(166, 0, 0)"/><rect x="118.2" y="185.4" width="2.2" height="2.8" fill="rgb(156, 0, 0)"/><rect x="120.1" y="185.4" width="2.2" height="2.8" fill="rgb(146, 0, 0)"/><rect x="122.0" y="185.4" width="2.2" height="2.8" fill="rgb(159, 0, 0)"/><rect x="123.9" y="185.4" width="2.2" height="2.8" fill="rgb(128, 0, 0)"/><rect x="125.8" y="185.4" width="2.2" height="2.8" fill="rgb(93, 0, 0)"/><rect x="127.7" y="185.4" width="2.2" height="2.8" fill="rgb(71, 0, 0)"/><rect x="129.6" y="185.4" width="2.2" height="2.8" fill="rgb(50, 0, 0)"/><rect x="131.5" y="185.4" width="2.2" height="2.8" fill="rgb(30, 0, 0)"/><rect x="133.4" y="185.4" width="2.2" height="2.8" fill="rgb(15, 0, 0)"/><rect x="205.9" y="185.4" width="2.2" height="2.8" fill="rgb(15, 0, 0)"/><rect x="224.9" y="185.4" width="2.2" height="2.8" fill="rgb(12, 0, 0)"/><rect x="297.4" y="185.4" width="2.2" height="2.8" fill="rgb(11, 0, 0)"/><rect x="99.1" y="188.0" width="2.2" height="2.8" fill="rgb(9, 0, 0)"/><rect x="101.0" y="188.0" width="2.2" height="2.8" fill="rgb(16, 0, 0)"/><rect x="102.9" y="188.0" width="2.2" height="2.8" fill="rgb(27, 0, 0)"/><rect x="104.8" y="188.0" width="2.2" height="2.8" fill="rgb(40, 0, 0)"/><rect x="106.8" y="188.0" width="2.2" height="2.8" fill="rgb(62, 0, 0)"/><rect x="108.7" y="188.0" width="2.2" height="2.8" fill="rgb(72, 0, 0)"/><rect x="110.6" y="188.0" width="2.2" height="2.8" fill="rgb(84, 0, 0)"/><rect x="112.5" y="188.0" width="2.2" height="2.8" fill="rgb(125, 0, 0)"/><rect x="114.4" y="188.0" width="2.2" height="2.8" fill="rgb(109, 0, 0)"/><rect x="116.3" y="188.0" width="2.2" height="2.8" fill="rgb(96, 0, 0)"/><rect x="118.2" y="188.0" width="2.2" height="2.8" fill="rgb(110, 0, 0)"/><rect x="120.1" y="188.0" width="2.2" height="2.8" fill="rgb(92, 0, 0)"/><rect x="122.0" y="188.0" width="2.2" height="2.8" fill="rgb(91, 0, 0)"/><rect x="123.9" y="188.0" width="2.2" height="2.8" fill="rgb(69, 0, 0)"/><rect x="125.8" y="188.0" width="2.2" height="2.8" fill="rgb(51, 0, 0)"/><rect x="127.7" y="188.0" width="2.2" height="2.8" fill="rgb(37, 0, 0)"/><rect x="129.6" y="188.0" width="2.2" height="2.8" fill="rgb(25, 0, 0)"/><rect x="131.5" y="188.0" width="2.2" height="2.8" fill="rgb(14, 0, 0)"/><rect x="221.1" y="188.0" width="2.2" height="2.8" fill="rgb(11, 0, 0)"/><rect x="102.9" y="190.5" width="2.2" height="2.8" fill="rgb(9, 0, 0)"/><rect x="104.8" y="190.5" width="2.2" height="2.8" fill="rgb(15, 0, 0)"/><rect x="106.8" y="190.5" width="2.2" height="2.8" fill="rgb(30, 0, 0)"/><rect x="108.7" y="190.5" width="2.2" height="2.8" fill="rgb(32, 0, 0)"/><rect x="110.6" y="190.5" width="2.2" height="2.8" fill="rgb(43, 0, 0)"/><rect x="112.5" y="190.5" width="2.2" height="2.8" fill="rgb(48, 0, 0)"/><rect x="114.4" y="190.5" width="2.2" height="2.8" fill="rgb(45, 0, 0)"/><rect x="116.3" y="190.5" width="2.2" height="2.8" fill="rgb(49, 0, 0)"/><rect x="118.2" y="190.5" width="2.2" height="2.8" fill="rgb(50, 0, 0)"/><rect x="120.1" y="190.5" width="2.2" height="2.8" fill="rgb(48, 0, 0)"/><rect x="122.0" y="190.5" width="2.2" height="2.8" fill="rgb(42, 0, 0)"/><rect x="123.9" y="190.5" width="2.2" height="2.8" fill="rgb(25, 0, 0)"/><rect x="125.8" y="190.5" width="2.2" height="2.8" fill="rgb(26, 0, 0)"/><rect x="127.7" y="190.5" width="2.2" height="2.8" fill="rgb(16, 0, 0)"/><rect x="129.6" y="190.5" width="2.2" height="2.8" fill="rgb(9, 0, 0)"/><rect x="40.0" y="193.0" width="2.2" height="2.8" fill="rgb(11, 0, 0)"/><rect x="51.5" y="193.0" width="2.2" height="2.8" fill="rgb(11, 0, 0)"/><rect x="80.1" y="193.0" width="2.2" height="2.8" fill="rgb(19, 0, 0)"/><rect x="108.7" y="193.0" width="2.2" height="2.8" fill="rgb(14, 0, 0)"/><rect x="110.6" y="193.0" width="2.2" height="2.8" fill="rgb(20, 0, 0)"/><rect x="112.5" y="193.0" width="2.2" height="2.8" fill="rgb(15, 0, 0)"/><rect x="114.4" y="193.0" width="2.2" height="2.8" fill="rgb(20, 0, 0)"/><rect x="116.3" y="193.0" width="2.2" height="2.8" fill="rgb(18, 0, 0)"/><rect x="118.2" y="193.0" width="2.2" height="2.8" fill="rgb(19, 0, 0)"/><rect x="120.1" y="193.0" width="2.2" height="2.8" fill="rgb(18, 0, 0)"/><rect x="122.0" y="193.0" width="2.2" height="2.8" fill="rgb(13, 0, 0)"/><rect x="125.8" y="193.0" width="2.2" height="2.8" fill="rgb(9, 0, 0)"/><rect x="150.6" y="193.0" width="2.2" height="2.8" fill="rgb(10, 0, 0)"/><rect x="194.4" y="195.6" width="2.2" height="2.8" fill="rgb(18, 0, 0)"/><rect x="268.8" y="195.6" width="2.2" height="2.8" fill="rgb(18, 0, 0)"/><rect x="303.1" y="195.6" width="2.2" height="2.8" fill="rgb(19, 0, 0)"/><rect x="34.3" y="200.7" width="2.2" height="2.8" fill="rgb(14, 0, 0)"/><rect x="43.8" y="200.7" width="2.2" height="2.8" fill="rgb(18, 0, 0)"/><rect x="85.8" y="200.7" width="2.2" height="2.8" fill="rgb(11, 0, 0)"/><rect x="226.8" y="200.7" width="2.2" height="2.8" fill="rgb(8, 0, 0)"/><rect x="87.7" y="203.2" width="2.2" height="2.8" fill="rgb(20, 0, 0)"/><rect x="91.5" y="203.2" width="2.2" height="2.8" fill="rgb(15, 0, 0)"/><rect x="181.1" y="205.7" width="2.2" height="2.8" fill="rgb(19, 0, 0)"/><rect x="207.8" y="205.7" width="2.2" height="2.8" fill="rgb(10, 0, 0)"/><rect x="34.3" y="208.3" width="2.2" height="2.8" fill="rgb(16, 0, 0)"/><rect x="61.0" y="210.8" width="2.2" height="2.8" fill="rgb(15, 0, 0)"/><rect x="135.3" y="215.9" width="2.2" height="2.8" fill="rgb(16, 0, 0)"/><rect x="19.1" y="218.4" width="2.2" height="2.8" fill="rgb(13, 0, 0)"/><rect x="21.0" y="218.4" width="2.2" height="2.8" fill="rgb(15, 0, 0)"/><rect x="263.1" y="218.4" width="2.2" height="2.8" fill="rgb(20, 0, 0)"/><rect x="102.9" y="223.5" width="2.2" height="2.8" fill="rgb(16, 0, 0)"/><rect x="3.8" y="226.1" width="2.2" height="2.8" fill="rgb(12, 0, 0)"/><rect x="66.7" y="226.1" width="2.2" height="2.8" fill="rgb(17, 0, 0)"/><rect x="112.5" y="226.1" width="2.2" height="2.8" fill="rgb(15, 0, 0)"/><rect x="13.3" y="231.1" width="2.2" height="2.8" fill="rgb(9, 0, 0)"/><rect x="80.1" y="231.1" width="2.2" height="2.8" fill="rgb(8, 0, 0)"/><rect x="207.8" y="231.1" width="2.2" height="2.8" fill="rgb(14, 0, 0)"/><rect x="5.7" y="233.7" width="2.2" height="2.8" fill="rgb(10, 0, 0)"/><rect x="45.8" y="236.2" width="2.2" height="2.8" fill="rgb(19, 0, 0)"/><rect x="47.7" y="236.2" width="2.2" height="2.8" fill="rgb(19, 0, 0)"/><rect x="135.3" y="236.2" width="2.2" height="2.8" fill="rgb(20, 0, 0)"/><rect x="245.9" y="236.2" width="2.2" height="2.8" fill="rgb(20, 0, 0)"/><rect x="301.2" y="236.2" width="2.2" height="2.8" fill="rgb(9, 0, 0)"/><rect x="99.1" y="238.8" width="2.2" height="2.8" fill="rgb(18, 0, 0)"/><rect x="95.3" y="241.3" width="2.2" height="2.8" fill="rgb(10, 0, 0)"/><rect x="232.6" y="241.3" width="2.2" height="2.8" fill="rgb(18, 0, 0)"/><rect x="253.5" y="241.3" width="2.2" height="2.8" fill="rgb(14, 0, 0)"/><rect x="112.5" y="243.8" width="2.2" height="2.8" fill="rgb(15, 0, 0)"/><rect x="141.1" y="243.8" width="2.2" height="2.8" fill="rgb(9, 0, 0)"/><rect x="49.6" y="246.4" width="2.2" height="2.8" fill="rgb(10, 0, 0)"/><rect x="112.5" y="246.4" width="2.2" height="2.8" fill="rgb(16, 0, 0)"/><rect x="133.4" y="246.4" width="2.2" height="2.8" fill="rgb(19, 0, 0)"/><rect x="230.7" y="246.4" width="2.2" height="2.8" fill="rgb(20, 0, 0)"/><rect x="22.9" y="251.5" width="2.2" height="2.8" fill="rgb(9, 0, 0)"/><rect x="226.8" y="251.5" width="2.2" height="2.8" fill="rgb(14, 0, 0)"/><rect x="251.6" y="251.5" width="2.2" height="2.8" fill="rgb(9, 0, 0)"/></svg>
<div style="left:736px;top:72px;width:5px;height:1px;background:#000"></div>
<span class="t" style="right:391px;top:65.1px;font-size:11.8px;line-height:14px;">0</span>
<div style="left:736px;top:97px;width:5px;height:1px;background:#000"></div>
<span class="t" style="right:391px;top:90.5px;font-size:11.8px;line-height:14px;">10</span>
<div style="left:736px;top:123px;width:5px;height:1px;background:#000"></div>
<span class="t" style="right:391px;top:115.9px;font-size:11.8px;line-height:14px;">20</span>
<div style="left:736px;top:148px;width:5px;height:1px;background:#000"></div>
<span class="t" style="right:391px;top:141.3px;font-size:11.8px;line-height:14px;">30</span>
<div style="left:736px;top:174px;width:5px;height:1px;background:#000"></div>
<span class="t" style="right:391px;top:166.7px;font-size:11.8px;line-height:14px;">40</span>
<div style="left:736px;top:199px;width:5px;height:1px;background:#000"></div>
<span class="t" style="right:391px;top:192.1px;font-size:11.8px;line-height:14px;">50</span>
<div style="left:736px;top:224px;width:5px;height:1px;background:#000"></div>
<span class="t" style="right:391px;top:217.5px;font-size:11.8px;line-height:14px;">60</span>
<div style="left:736px;top:250px;width:5px;height:1px;background:#000"></div>
<span class="t" style="right:391px;top:242.9px;font-size:11.8px;line-height:14px;">70</span>
<div style="left:736px;top:275px;width:5px;height:1px;background:#000"></div>
<span class="t" style="right:391px;top:268.3px;font-size:11.8px;line-height:14px;">80</span>
<div style="left:736px;top:301px;width:5px;height:1px;background:#000"></div>
<span class="t" style="right:391px;top:293.7px;font-size:11.8px;line-height:14px;">90</span>
<div style="left:736px;top:326px;width:5px;height:1px;background:#000"></div>
<span class="t" style="right:391px;top:319.1px;font-size:11.8px;line-height:14px;">100</span>
<div style="left:742px;top:328px;width:1px;height:5px;background:#000"></div>
<span class="t" style="left:541.5px;width:400px;text-align:center;top:335.1px;font-size:11.8px;line-height:14px;">0</span>
<div style="left:779px;top:328px;width:1px;height:5px;background:#000"></div>
<span class="t" style="left:579.45px;width:400px;text-align:center;top:335.1px;font-size:11.8px;line-height:14px;">20</span>
<div style="left:817px;top:328px;width:1px;height:5px;background:#000"></div>
<span class="t" style="left:617.4px;width:400px;text-align:center;top:335.1px;font-size:11.8px;line-height:14px;">40</span>
<div style="left:855px;top:328px;width:1px;height:5px;background:#000"></div>
<span class="t" style="left:655.35px;width:400px;text-align:center;top:335.1px;font-size:11.8px;line-height:14px;">60</span>
<div style="left:893px;top:328px;width:1px;height:5px;background:#000"></div>
<span class="t" style="left:693.3px;width:400px;text-align:center;top:335.1px;font-size:11.8px;line-height:14px;">80</span>
<div style="left:931px;top:328px;width:1px;height:5px;background:#000"></div>
<span class="t" style="left:731.25px;width:400px;text-align:center;top:335.1px;font-size:11.8px;line-height:14px;">100</span>
<div style="left:969px;top:328px;width:1px;height:5px;background:#000"></div>
<span class="t" style="left:769.2px;width:400px;text-align:center;top:335.1px;font-size:11.8px;line-height:14px;">120</span>
<div style="left:1007px;top:328px;width:1px;height:5px;background:#000"></div>
<span class="t" style="left:807.1500000000001px;width:400px;text-align:center;top:335.1px;font-size:11.8px;line-height:14px;">140</span>
<div style="left:1045px;top:328px;width:1px;height:5px;background:#000"></div>
<span class="t" style="left:845.0999999999999px;width:400px;text-align:center;top:335.1px;font-size:11.8px;line-height:14px;">160</span>
<svg style="left:1072px;top:58px" width="22" height="150"><defs><linearGradient id="cb" x1="0" y1="0" x2="0" y2="1"><stop offset="0" stop-color="#ffe850"/><stop offset="0.25" stop-color="#ffa030"/><stop offset="0.5" stop-color="#ff1000"/><stop offset="0.62" stop-color="#c00000"/><stop offset="0.8" stop-color="#500000"/><stop offset="1" stop-color="#000"/></linearGradient></defs><rect x="0.5" y="0.5" width="20" height="149" fill="#000" stroke="#000"/><rect x="1" y="1" width="19" height="3" fill="#fff"/><rect x="1" y="6" width="19" height="143" fill="url(#cb)"/></svg>
<div style="left:1093px;top:64px;width:5px;height:1px;background:#000"></div>
<span class="t" style="left:1099px;top:57.1px;font-size:11.8px;line-height:14px;">150</span>
<div style="left:1093px;top:133px;width:5px;height:1px;background:#000"></div>
<span class="t" style="left:1099px;top:126.1px;font-size:11.8px;line-height:14px;">110</span>
<div style="left:1093px;top:201px;width:5px;height:1px;background:#000"></div>
<span class="t" style="left:1099px;top:194.1px;font-size:11.8px;line-height:14px;">70</span>
<div style="left:701px;top:390px;width:92px;height:30px;background:linear-gradient(#f2f2f2,#e4e4e4 50%,#d6d6d6 52%,#d0d0d0);border:1px solid #8f8f8f;border-radius:4px;box-sizing:border-box;box-shadow:1px 1px 1px #aaa"></div>
<div style="left:712px;top:397px;width:16px;height:16px;background:#ff0000;border:1px solid #a00;box-sizing:border-box"></div>
<span class="t" style="left:560px;width:400px;text-align:center;top:398.1px;font-size:11.8px;line-height:14px;color:#f00">STOP</span>
<span class="t" style="left:809px;top:371.6px;font-size:11.1px;line-height:13px;">Gain</span>
<div style="left:809px;top:389px;width:91px;height:31px;background:linear-gradient(#ececec,#d8d8d8);border:1px solid #999;border-radius:4px;box-sizing:border-box;box-shadow:1px 1px 1px #aaa"></div>
<div style="left:816px;top:395px;width:14px;height:20px;background:#e9e9e9;border:1px solid #aaa;border-radius:3px;box-sizing:border-box"></div>
<svg style="left:816px;top:395px" width="14" height="20"><path d="M4 7 L7 4 L10 7Z M4 13 L7 16 L10 13Z" fill="#666"/><path d="M2 10h10" stroke="#bbb"/></svg>
<div style="left:833px;top:395px;width:61px;height:20px;background:#fbfbfb;border:1px solid #a8a8a8;box-sizing:border-box"></div>
<span class="t" style="left:837px;top:398.1px;font-size:11.8px;line-height:14px;">0</span>
<span class="t" style="left:918px;top:371.6px;font-size:11.2px;line-height:13px;">Exposure (ms)</span>
<div style="left:918px;top:389px;width:101px;height:31px;background:linear-gradient(#ececec,#d8d8d8);border:1px solid #999;border-radius:4px;box-sizing:border-box;box-shadow:1px 1px 1px #aaa"></div>
<div style="left:925px;top:395px;width:14px;height:20px;background:#e9e9e9;border:1px solid #aaa;border-radius:3px;box-sizing:border-box"></div>
<svg style="left:925px;top:395px" width="14" height="20"><path d="M4 7 L7 4 L10 7Z M4 13 L7 16 L10 13Z" fill="#666"/><path d="M2 10h10" stroke="#bbb"/></svg>
<div style="left:942px;top:395px;width:71px;height:20px;background:#fbfbfb;border:1px solid #a8a8a8;box-sizing:border-box"></div>
<span class="t" style="left:946px;top:398.1px;font-size:11.8px;line-height:14px;">100</span>
<span class="t" style="left:1050px;top:371.6px;font-size:11.6px;line-height:13px;">FrameNumber</span>
<div style="left:1050px;top:389px;width:90px;height:31px;background:linear-gradient(#ececec,#d8d8d8);border:1px solid #999;border-radius:4px;box-sizing:border-box;box-shadow:1px 1px 1px #aaa"></div>
<div style="left:1056px;top:395px;width:78px;height:20px;background:#d4d4d4;border:1px solid #a8a8a8;box-sizing:border-box"></div>
<span class="t" style="left:1060px;top:398.1px;font-size:11.8px;line-height:14px;">157</span>
<span class="t" style="left:713px;top:432.1px;font-size:11.9px;line-height:14px;">file (use dialog)</span>
<div style="left:712px;top:448px;width:340px;height:23px;background:#d8d8d8"></div>
<div style="left:713px;top:449px;width:338px;height:21px;background:#c8c8c8;border-top:1px solid #a0a0a0;box-sizing:border-box"></div>
<div style="left:724px;top:451px;width:326px;height:18px;background:#fbfbfb"></div>
<div style="left:714px;top:451px;width:10px;height:18px;background:#b8b8b8"></div>
<svg style="left:715px;top:453px" width="8" height="13"><path d="M1.5 1.5h3v3.5h-3z M3 5v2 M3.5 7.5h3v3h-3z" fill="none" stroke="#000" stroke-width="1.3"/></svg>
<span class="t" style="left:727px;top:453.1px;font-size:12px;line-height:14px;">C:\VIs\Thorcam\LatestImage.txt</span>
<div style="left:1056px;top:447px;width:28px;height:17px;background:linear-gradient(#d4d4d4,#b4b4b4);border:1px solid #8a8a8a;box-sizing:border-box"></div>
<svg style="left:1060px;top:449px" width="20" height="13"><path d="M2 3 H7 L8 4 H14 V11 H2Z" fill="#5a5a3a" stroke="#222" stroke-width="0.8"/><path d="M2 3 V8 H14" fill="none" stroke="#ff0" stroke-width="1.6"/><path d="M4 6 H18 L15 11 H2Z" fill="#6b6b4a" stroke="#222" stroke-width="0.8"/></svg>
<div style="left:683px;top:484px;width:442px;height:16px;background:#f0f0f0"></div>
<div style="left:866px;top:485px;width:231px;height:14px;background:#cdcdcd"></div>
<svg style="left:852px;top:486px" width="12" height="12"><path d="M8 2 L4 6 L8 10" stroke="#444" stroke-width="1.5" fill="none"/></svg>
<svg style="left:1111px;top:486px" width="12" height="12"><path d="M4 2 L8 6 L4 10" stroke="#444" stroke-width="1.5" fill="none"/></svg>
<div style="left:683px;top:500px;width:442px;height:2px;background:#d0d0d0"></div>
<div style="left:682px;top:500px;width:44px;height:8px;background:linear-gradient(#e6e6e6,#d8d8d8)"></div>
<svg style="left:700px;top:500px" width="26" height="8"><path d="M4 7 L10 1" stroke="#888"/><rect x="18" y="1" width="2" height="2" fill="#aaa"/><rect x="22" y="1" width="2" height="2" fill="#aaa"/><rect x="18" y="5" width="2" height="2" fill="#aaa"/><rect x="22" y="5" width="2" height="2" fill="#aaa"/></svg>
<div style="left:683px;top:483px;width:166px;height:18px;background:#fff;border:1px solid #000;box-sizing:border-box"></div>
<span class="t" style="left:686px;top:485.1px;font-size:12.2px;line-height:14px;">Thorcam.lvproj/My Computer</span>
</body></html>
